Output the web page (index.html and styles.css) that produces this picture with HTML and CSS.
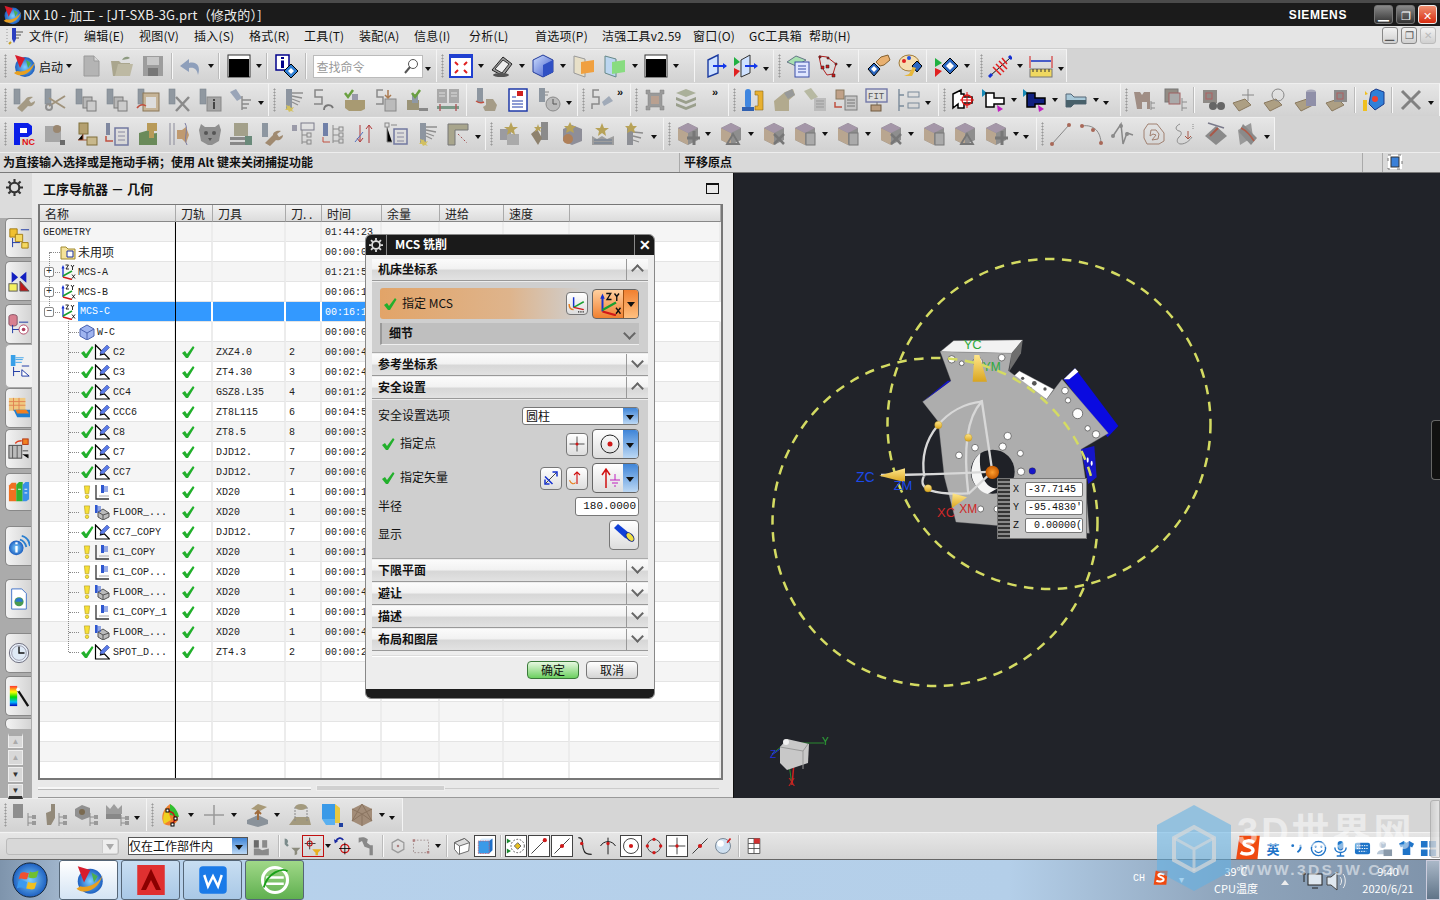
FILE: index.html
```html
<!DOCTYPE html>
<html lang="zh">
<head>
<meta charset="utf-8">
<title>NX 10 - 加工</title>
<link rel="stylesheet" href="styles.css">
</head>
<body>
<svg class="defs" xmlns="http://www.w3.org/2000/svg">
<defs>
<linearGradient id="gy" x1="0" y1="0" x2="0" y2="1"><stop offset="0" stop-color="#ffe68a"/><stop offset="1" stop-color="#d9a520"/></linearGradient>
<radialGradient id="gb"><stop offset="0" stop-color="#7fd0ff"/><stop offset="1" stop-color="#1d5fc0"/></radialGradient>
<radialGradient id="go"><stop offset="0" stop-color="#ffa030"/><stop offset="1" stop-color="#c85a00"/></radialGradient>
<linearGradient id="gc" x1="0" y1="0" x2="1" y2="1"><stop offset="0" stop-color="#cfe0ff"/><stop offset="1" stop-color="#3a54c8"/></linearGradient>
<linearGradient id="gr" x1="0" y1="0" x2="0" y2="1"><stop offset="0" stop-color="#f33"/><stop offset=".3" stop-color="#ff0"/><stop offset=".55" stop-color="#0d0"/><stop offset=".8" stop-color="#0bf"/><stop offset="1" stop-color="#00b"/></linearGradient>
<symbol id="nx" viewBox="0 0 24 24"><circle cx="13" cy="13" r="10" fill="url(#gb)"/><path d="M2 19c6 5 17 2 21-11-3 6-11 11-18 9z" fill="#e8a020"/><path d="M3 1l10 3-5 10z" fill="#d81c2c"/><path d="M14 6l5 3-3 5z" fill="#4caf50"/></symbol>
<symbol id="mnu" viewBox="0 0 18 18"><path d="M1 2v14" stroke="#999" stroke-dasharray="1 2"/><path d="M6 1h4v11l-2 4-2-4z" fill="#2a3fc0"/><path d="M10 5h7M10 8h5M10 11h3" stroke="#555"/><path d="M5 15l-2 2" stroke="#c8a020" stroke-width="2"/></symbol>
<symbol id="doc" viewBox="0 0 24 24"><path d="M5 2h10l5 5v15H5z" fill="#b4b4b4" stroke="#9a9a9a"/><path d="M15 2v5h5" fill="#d8d8d8" stroke="#999"/></symbol>
<symbol id="fold" viewBox="0 0 24 24"><path d="M1 7h8l2 2h9v13H3z" fill="#aaa68e"/><path d="M5 22l3-12h15l-3 12z" fill="#bdb9a3"/><path d="M12 6c2-4 6-4 8-2l-2 1z" fill="#8d9a80"/></symbol>
<symbol id="save" viewBox="0 0 24 24"><rect x="2" y="2" width="20" height="20" fill="#9d9d9d"/><rect x="6" y="3" width="12" height="8" fill="#c8c8c8"/><rect x="7" y="14" width="10" height="8" fill="#777"/></symbol>
<symbol id="undo" viewBox="0 0 24 24"><path d="M20 21c3-8-1-14-9-12V5L2 12l9 6v-4c5-1 8 1 9 7z" fill="#8e9fbb"/></symbol>
<symbol id="blk" viewBox="0 0 24 24"><rect x="1" y="1" width="22" height="22" fill="#fff" stroke="#333"/><rect x="2" y="5" width="20" height="18" fill="#000"/></symbol>
<symbol id="info" viewBox="0 0 24 24"><rect x="1" y="1" width="13" height="15" fill="#fff" stroke="#00008b" stroke-width="1.5"/><path d="M6 3h3v2H6zM6 6.500h3V14H6z" fill="#00008b"/><path d="M16 10l7 7-7 7-7-7z" fill="#2d7dd2" stroke="#000"/><path d="M16 14l3 3-3 3-3-3z" fill="#fff"/></symbol>
<symbol id="fit" viewBox="0 0 24 24"><rect x="1" y="1" width="22" height="22" fill="#fff" stroke="#1f3fd0" stroke-width="2"/><rect x="1" y="1" width="22" height="3" fill="#1f3fd0"/><path d="M6 8l3 3M18 8l-3 3M6 19l3-3M18 19l-3-3" stroke="#e02020" stroke-width="2"/></symbol>
<symbol id="shade" viewBox="0 0 24 24"><path d="M2 16L13 3l9 7-9 12z" fill="#999" stroke="#222"/><path d="M5 15l8-9 6 4-7 9z" fill="#eee" stroke="#333"/><ellipse cx="11" cy="21" rx="8" ry="2" fill="#555"/></symbol>
<symbol id="cube" viewBox="0 0 24 24"><path d="M12 1l10 5v12l-10 5-10-5V6z" fill="url(#gc)" stroke="#223a9a"/><path d="M12 11l10-5v12l-10 5z" fill="#3050c4"/></symbol>
<symbol id="secO" viewBox="0 0 24 24"><path d="M2 2l11 3v18L2 19z" fill="#e8e0c8" stroke="#999"/><path d="M9 8l13-2v12l-13 2z" fill="#f0a040"/></symbol>
<symbol id="secG" viewBox="0 0 24 24"><path d="M2 2l11 3v18L2 19z" fill="#bcd6f0" stroke="#688"/><path d="M9 8l13-2v12l-13 2z" fill="#88dc80"/></symbol>
<symbol id="plane" viewBox="0 0 24 24"><path d="M5 6l10-5v18L5 23z" fill="#cfe2ff" stroke="#1a3aa0" stroke-width="1.400"/><path d="M10 12h13" stroke="#1438e8" stroke-width="2"/><path d="M20 9l4 3-4 3z" fill="#1438e8"/></symbol>
<symbol id="plane2" viewBox="0 0 24 24"><path d="M0 3l6 5-6 4z" fill="#20b040"/><path d="M0 14l6 3-6 6z" fill="#e02020"/><path d="M7 6l9-5v18l-9 4z" fill="#cfe2ff" stroke="#333"/><path d="M11 12h11" stroke="#1438e8" stroke-width="2"/><path d="M20 9l4 3-4 3z" fill="#1438e8"/></symbol>
<symbol id="lay" viewBox="0 0 24 24"><path d="M1 8l9-6 10 4-10 6z" fill="#a8e0b0" stroke="#678"/><rect x="9" y="8" width="14" height="15" fill="#dfe6ff" stroke="#3a4ea8"/><path d="M12 12h8M12 15h8M12 18h8" stroke="#3a4ea8"/></symbol>
<symbol id="ptree" viewBox="0 0 24 24"><path d="M2 2l8 1 9 7-3 10-6 1-6-9z" fill="none" stroke="#b02020"/><path d="M2 2h2v2H2zM10 3h2v2h-2zM18 9h2v2h-2zM15 20h3v3h-3zM9 11h3v3H9zM4 12h3v3H4z" fill="#d01818" stroke="#222" stroke-width=".5"/></symbol>
<symbol id="hand" viewBox="0 0 24 24"><path d="M1 15l6-6 6 6-6 7z" fill="#2a66c0" stroke="#000"/><path d="M4 15l3-3 3 3-3 3z" fill="#fff"/><path d="M9 8l5-5 7-2 2 5-6 5-4 1z" fill="#e8b070" stroke="#85602f"/></symbol>
<symbol id="pal" viewBox="0 0 24 24"><ellipse cx="11" cy="9" rx="10" ry="8" fill="#f5deb0" stroke="#a07a38"/><circle cx="6" cy="7" r="2" fill="#e02020"/><circle cx="11" cy="4" r="2" fill="#2050e0"/><path d="M14 12l5-5 5 5-5 6z" fill="#2a66c0" stroke="#000"/><path d="M6 22l5-2 4-7 3 1-4 8z" fill="#e8b83a"/></symbol>
<symbol id="dia" viewBox="0 0 24 24"><path d="M0 4l7 5-7 4z" fill="#20b040"/><path d="M0 14l7 3-7 6z" fill="#e02020"/><path d="M15 4l8 8-8 8-8-8z" fill="#2a66c0" stroke="#000"/><path d="M15 8l4 4-4 4-4-4z" fill="#fff"/></symbol>
<symbol id="wcs" viewBox="0 0 24 24"><path d="M2 22L22 4" stroke="#111"/><path d="M1 23l3-3M21 2l3 3" stroke="#1430d0" stroke-width="3"/><path d="M5 13l8 8M8 10l8 8M11 7l8 8M14 4l5 6" stroke="#e01c1c" stroke-width="1.500"/></symbol>
<symbol id="rul" viewBox="0 0 24 24"><path d="M1 2v12M23 2v12" stroke="#d01818"/><path d="M2 7h20" stroke="#1430c0" stroke-width="1.500"/><rect x="1" y="15" width="22" height="8" fill="#f0d860" stroke="#777"/><path d="M4 15v3M8 15v3M12 15v3M16 15v3M20 15v3" stroke="#333"/></symbol>
<symbol id="stem" viewBox="0 0 24 24"><rect x="2" y="1" width="6" height="15" fill="#9098a0" stroke="#7e8890" stroke-width=".6"/></symbol>
<symbol id="wr" viewBox="0 0 24 24"><use href="#stem"/><path d="M5 20l8-8c1-3 5-4 8-3l-4 3 2 3 4-2c0 4-4 6-7 5l-6 6z" fill="#a49a84"/></symbol>
<symbol id="sc" viewBox="0 0 24 24"><use href="#stem"/><path d="M6 18L22 8M6 10l16 10" stroke="#a0937c" stroke-width="2"/><circle cx="6" cy="19" r="3" fill="none" stroke="#8f8f8f" stroke-width="2"/></symbol>
<symbol id="cp" viewBox="0 0 24 24"><use href="#stem"/><rect x="9" y="9" width="9" height="11" fill="#b8b8b8" stroke="#7b7b7b"/><rect x="13" y="13" width="9" height="10" fill="#ccc" stroke="#7b7b7b"/></symbol>
<symbol id="cl" viewBox="0 0 24 24"><use href="#stem"/><rect x="7" y="5" width="16" height="18" fill="#c6b497" stroke="#8a7757"/><rect x="10" y="9" width="10" height="11" fill="#ddd"/><path d="M1 20c3-4 6-4 9-2" stroke="#c05040" stroke-width="1.500" fill="none"/></symbol>
<symbol id="xx" viewBox="0 0 24 24"><use href="#stem"/><path d="M9 9l13 14M22 9L9 23" stroke="#8a8a8a" stroke-width="2.500"/></symbol>
<symbol id="ii" viewBox="0 0 24 24"><use href="#stem"/><rect x="9" y="9" width="14" height="14" fill="#a5a5a5" stroke="#888"/><path d="M15 11h2v2h-2zM15 14h2v7h-2z" fill="#444"/></symbol>
<symbol id="fl" viewBox="0 0 24 24"><path d="M1 4l6-3 6 9-5 3z" fill="#9aa5b8"/><path d="M13 8v14M13 12h9M13 16h7M13 20h5" stroke="#8a8a8a" stroke-width="1.400"/></symbol>
<symbol id="ln" viewBox="0 0 24 24"><rect x="5" y="1" width="6" height="20" fill="#8d95a0"/><path d="M11 5h11M11 8l10 2M11 11l8 3M11 14l6 3" stroke="#8e8e8e" stroke-width="1.300"/><path d="M8 17l2 3 3-1-2 3 2 2-3-1-2 1-1-2-3 0 2-2-1-3 3 1z" fill="#d2c060"/></symbol>
<symbol id="sp" viewBox="0 0 24 24"><path d="M11 2H3v7h7v7H2" fill="none" stroke="#878787" stroke-width="1.500"/><path d="M12 22c0-6 7-6 9-2" fill="none" stroke="#777" stroke-width="1.800"/></symbol>
<symbol id="ck" viewBox="0 0 24 24"><rect x="9" y="6" width="6" height="12" fill="#99a"/><path d="M2 12h20v9l-4 2H6l-4-3z" fill="#a89a72"/><path d="M2 5l3 4 5-7" fill="none" stroke="#6aa040" stroke-width="2.500"/></symbol>
<symbol id="sd" viewBox="0 0 24 24"><path d="M9 2H3v7h6v7H2" fill="none" stroke="#8a8a8a" stroke-width="1.500"/><rect x="11" y="11" width="11" height="12" fill="#bbb" stroke="#888"/><path d="M14 2v8M11 7l3 3 3-3" stroke="#aa7a50" stroke-width="1.500" fill="none"/></symbol>
<symbol id="ck2" viewBox="0 0 24 24"><path d="M2 12h12v10H2z" fill="#9b9478"/><path d="M14 20h9v3h-9z" fill="#888"/><rect x="7" y="6" width="6" height="9" fill="#8e98a5"/><path d="M7 5l3 4 5-7" fill="none" stroke="#6aa040" stroke-width="2.500"/></symbol>
<symbol id="bk" viewBox="0 0 24 24"><rect x="1" y="1" width="10" height="14" fill="#a9a9a9"/><rect x="13" y="1" width="10" height="14" fill="#a9a9a9"/><path d="M3 5h6M3 8h6M15 5h6M15 8h6" stroke="#ddd"/><rect x="1" y="18" width="22" height="3" fill="#7b9a88"/><path d="M4 16v7M20 16v7" stroke="#b06060" stroke-width="1.500"/></symbol>
<symbol id="rob" viewBox="0 0 24 24"><rect x="2" y="0" width="6" height="14" fill="#8d96a0"/><path d="M1 13c3 2 6 2 8 1" stroke="#c05040" stroke-width="1.500" fill="none"/><path d="M11 11h7l4 6-2 6H10l-2-4 3-2z" fill="#a59c88"/></symbol>
<symbol id="pgb" viewBox="0 0 24 24"><rect x="3" y="1" width="18" height="22" fill="#fff" stroke="#1f3aa8" stroke-width="1.500"/><path d="M6 9h4M6 13h11M6 16h11M6 19h11" stroke="#1f3aa8"/><path d="M11 3h6v5h-6z" fill="#d02020"/></symbol>
<symbol id="clk" viewBox="0 0 24 24"><rect x="2" y="0" width="6" height="14" fill="#8d96a0"/><path d="M8 4h4M8 7h3" stroke="#888"/><circle cx="16" cy="16" r="7" fill="#bbb" stroke="#8a8a8a"/><path d="M16 11v5h4" stroke="#555" fill="none"/></symbol>
<symbol id="sfl" viewBox="0 0 24 24"><path d="M9 2H3v7h6v7H2v5" fill="none" stroke="#8a8a8a" stroke-width="1.500"/><path d="M12 14l7-6 4 5-9 5z" fill="#a0aab8"/></symbol>
<symbol id="mch" viewBox="0 0 24 24"><path d="M3 2h4v3h10V2h4v4h-2v12h2v4h-4v-3H7v3H3v-4h2V6H3z" fill="#9a9a9a" stroke="#808080" stroke-width=".5"/><rect x="8" y="8" width="8" height="8" fill="#b9a090"/></symbol>
<symbol id="stk" viewBox="0 0 24 24"><path d="M12 1l10 4-10 4-10-4z" fill="#aab09a"/><path d="M2 9l10 4 10-4v3l-10 4-10-4zM2 15l10 4 10-4v3l-10 4-10-4z" fill="#9a9f8c"/></symbol>
<symbol id="bot" viewBox="0 0 24 24"><rect x="4" y="1" width="6" height="19" rx="3" fill="#3f86e0"/><rect x="1" y="19" width="12" height="4" fill="#3060b0"/><path d="M14 3h8v19h-8v-4h3V7h-3z" fill="#e8b030" stroke="#8a6a18" stroke-width=".6"/></symbol>
<symbol id="elb" viewBox="0 0 24 24"><path d="M2 13l11-9 8-3 2 6-6 5v11H3z" fill="#b2aa8e"/><path d="M12 5l8-4 3 6-7 4z" fill="#979999"/></symbol>
<symbol id="lmp" viewBox="0 0 24 24"><path d="M1 3l7-3 7 9-7 3z" fill="#b7b9a2"/><rect x="11" y="10" width="12" height="13" fill="#bcbcbc"/><path d="M13 13h8M13 16h8M13 19h8" stroke="#999"/></symbol>
<symbol id="arrp" viewBox="0 0 24 24"><rect x="2" y="2" width="8" height="9" fill="#c0a188" stroke="#8a7a60"/><rect x="11" y="8" width="12" height="14" fill="#c5c5c5" stroke="#7c7c7c"/><path d="M1 14v5h7" stroke="#c05040" fill="none" stroke-width="1.500"/><path d="M13 12h8M13 15h8M13 18h8" stroke="#777"/></symbol>
<symbol id="fit2" viewBox="0 0 24 24"><rect x="1" y="1" width="21" height="13" fill="none" stroke="#7278a8" stroke-width="1.400"/><text x="3" y="11" font-size="9" font-family="Liberation Mono" fill="#555">FIT</text><path d="M12 14v3" stroke="#777"/><rect x="6" y="17" width="10" height="6" fill="#b89c80" stroke="#705a40"/></symbol>
<symbol id="lst" viewBox="0 0 24 24"><path d="M3 1v22M3 7h5M3 18h5" stroke="#7a8a9a" stroke-width="1.400"/><rect x="12" y="4" width="11" height="5" fill="none" stroke="#7a8a9a"/><rect x="12" y="15" width="11" height="5" fill="none" stroke="#7a8a9a"/></symbol>
<symbol id="ct1" viewBox="0 0 24 24"><path d="M2 6l8-4v4h3v3h8v6H13v5H7v-4L2 20z" fill="#fff" stroke="#000" stroke-width="1.500"/><circle cx="16" cy="12" r="5" fill="none" stroke="#e01010" stroke-width="1.300"/><path d="M16 4v16M9 12h14" stroke="#e01010"/></symbol>
<symbol id="ct2" viewBox="0 0 24 24"><path d="M0 1l5 4-5 4z" fill="#168ab8"/><path d="M4 5l8 0v5h10v6H12v3H4z" fill="#fff" stroke="#000" stroke-width="1.500"/><path d="M15 17l6 4-5 3z" fill="#c020c0"/></symbol>
<symbol id="ct3" viewBox="0 0 24 24"><path d="M0 1l5 4-5 4z" fill="#168ab8"/><path d="M4 5l8 0v5h10v6H12v3H4z" fill="#102080" stroke="#000" stroke-width="1.500"/><path d="M15 17l6 4-5 3z" fill="#c020c0"/></symbol>
<symbol id="nz" viewBox="0 0 24 24"><path d="M2 6h5l3 3h12v7H10l-3 3H2z" fill="#a8c8d8" stroke="#567"/><path d="M2 12h20v4H10l-3 3H2z" fill="#48606a"/></symbol>
<symbol id="grp1" viewBox="0 0 24 24"><path d="M1 4h6l2 3 2-3h6v17h-3v-7H9v7H4z" fill="#a08e85"/><path d="M18 13v9M18 15h4M18 20h4" stroke="#8c8c8c"/></symbol>
<symbol id="grp2" viewBox="0 0 24 24"><rect x="1" y="1" width="13" height="13" fill="#928c84" stroke="#777"/><rect x="5" y="5" width="11" height="11" fill="#aaa" stroke="#a06060"/><path d="M18 10v13M18 14h5M18 20h5" stroke="#8c8c8c"/></symbol>
<symbol id="bino" viewBox="0 0 24 24"><rect x="2" y="2" width="14" height="13" fill="#8e8a86"/><rect x="5" y="5" width="6" height="6" fill="none" stroke="#b06060"/><circle cx="12" cy="18" r="4" fill="#666"/><circle cx="20" cy="18" r="4" fill="#666"/></symbol>
<symbol id="tag1" viewBox="0 0 24 24"><path d="M1 15l12-4 6 6-12 6z" fill="#ad9f83" stroke="#8a7a60"/><path d="M16 1v12M10 7h12" stroke="#888"/></symbol>
<symbol id="tag2" viewBox="0 0 24 24"><path d="M1 15l12-4 6 6-12 6z" fill="#ad9f83" stroke="#8a7a60"/><circle cx="15" cy="7" r="6" fill="none" stroke="#888"/></symbol>
<symbol id="tag3" viewBox="0 0 24 24"><path d="M1 15l12-4 6 6-12 6z" fill="#ad9f83" stroke="#8a7a60"/><ellipse cx="17" cy="4" rx="5" ry="2.500" fill="#aab"/><path d="M12 4v14h10V4z" fill="#8f8fa8"/></symbol>
<symbol id="tag4" viewBox="0 0 24 24"><path d="M1 15l12-4 6 6-12 6z" fill="#ad9f83" stroke="#8a7a60"/><rect x="9" y="2" width="13" height="12" fill="#8b8b8b"/><rect x="12" y="5" width="6" height="6" fill="none" stroke="#b06060"/></symbol>
<symbol id="mag" viewBox="0 0 24 24"><path d="M14 1l8 3v12l-9 6-6-6 2-12z" fill="#3080d8" stroke="#1a3a8a"/><circle cx="13" cy="11" r="3" fill="#f04030"/><path d="M3 3l3 3-3 1zM1 12h4v11H1z" fill="#f0c020"/></symbol>
<symbol id="bigx" viewBox="0 0 24 24"><path d="M3 3l18 18M21 3L3 21" stroke="#818181" stroke-width="3"/></symbol>
<symbol id="pnc" viewBox="0 0 24 24"><path d="M2 1h14l4 3v8l-4 3H8v8H2z" fill="#0a1ee8"/><path d="M8 6h7v5H8z" fill="#fff"/><text x="10" y="23" font-size="9" font-family="Liberation Sans" font-weight="bold" fill="#e01010">NC</text></symbol>
<symbol id="bxs" viewBox="0 0 24 24"><path d="M12 1l10 5v12l-10 5-10-5V6z" fill="#8e8e8e"/><path d="M2 6l10 5v12L2 18z" fill="#b9a690"/><path d="M12 1l10 5-10 5L2 6z" fill="#a496a8"/></symbol>
<symbol id="bx2" viewBox="0 0 24 24"><use href="#bxs"/><path d="M12 12l10 10M22 12L12 22" stroke="#777" stroke-width="2.500"/></symbol>
<symbol id="bx3" viewBox="0 0 24 24"><use href="#bxs"/><rect x="13" y="11" width="9" height="12" fill="#aaa" stroke="#777"/></symbol>
<symbol id="bx4" viewBox="0 0 24 24"><use href="#bxs"/><path d="M8 22l6-10 6 10z" fill="none" stroke="#777" stroke-width="1.800"/></symbol>
<symbol id="bx5" viewBox="0 0 24 24"><use href="#bxs"/><path d="M18 9v14M11 16h13" stroke="#777" stroke-width="3"/></symbol>
<symbol id="crv1" viewBox="0 0 24 24"><path d="M3 22L20 3" stroke="#888"/><circle cx="3" cy="22" r="2" fill="#a86858"/><circle cx="20" cy="3" r="2" fill="#a86858"/></symbol>
<symbol id="crv2" viewBox="0 0 24 24"><path d="M2 4c12-2 19 6 19 18" stroke="#888" fill="none"/><circle cx="2" cy="4" r="2" fill="#a86858"/><circle cx="13" cy="8" r="2" fill="#a86858"/><circle cx="21" cy="21" r="2" fill="#a86858"/></symbol>
<symbol id="crv3" viewBox="0 0 24 24"><path d="M2 14L10 2l2 20 4-11 6 2" stroke="#888" fill="none" stroke-width="1.500"/><circle cx="2" cy="14" r="2" fill="#8a8a8a"/><circle cx="10" cy="4" r="2" fill="#8a8a8a"/><circle cx="16" cy="12" r="2" fill="#8a8a8a"/></symbol>
<symbol id="crv4" viewBox="0 0 24 24"><path d="M6 2h9l7 9v8l-5 3H5l-3-6V8zM9 8h5l3 4-1 5-6 1 4-5-3-1-3 2z" fill="none" stroke="#a08070"/></symbol>
<symbol id="crv5" viewBox="0 0 24 24"><path d="M7 2C2 4 2 8 6 9c3 0 3 4 0 6-3 3-2 7 2 7 5 0 9-4 11-7" fill="none" stroke="#8a8a8a"/><path d="M15 9v8M12 14l3 3 3-3" stroke="#a85848" fill="none"/><path d="M20 2v6" stroke="#888" stroke-dasharray="1 1"/></symbol>
<symbol id="crv6" viewBox="0 0 24 24"><path d="M1 14L12 4l11 10-11 9z" fill="#8a8a8a"/><path d="M6 14l8-8" stroke="#a85848" stroke-width="2"/><path d="M4 1l16 5" stroke="#7a7a8a" stroke-width="1.500"/></symbol>
<symbol id="crv7" viewBox="0 0 24 24"><path d="M3 8l13-7 2 14-13 8z" fill="#999"/><path d="M8 2l14 14-6 7L4 10z" fill="#8a8a8a"/><path d="M6 6c6 3 10 8 13 13" stroke="#b05c48" stroke-width="1.500" fill="none"/></symbol>
<symbol id="tr1" viewBox="0 0 24 24"><rect x="1" y="1" width="10" height="14" fill="#8e8e8e"/><path d="M16 10v13M16 14h5M16 20h5" stroke="#8c8c8c"/><rect x="20" y="12" width="4" height="4" fill="#999"/><rect x="20" y="18" width="4" height="4" fill="#999"/></symbol>
<symbol id="tr2" viewBox="0 0 24 24"><path d="M3 10l5-2V1h4v14l-4 7H4z" fill="#938a7a"/><path d="M16 10v13M16 14h5M16 20h5" stroke="#8c8c8c"/><rect x="20" y="12" width="4" height="4" fill="#999"/><rect x="20" y="18" width="4" height="4" fill="#999"/></symbol>
<symbol id="tr3" viewBox="0 0 24 24"><path d="M8 2l8 3v9l-8 3-7-4V6z" fill="#909090"/><circle cx="8" cy="9" r="3" fill="#7a6a50"/><path d="M16 10v13M16 14h5M16 20h5" stroke="#8c8c8c"/><rect x="20" y="12" width="4" height="4" fill="#999"/><rect x="20" y="18" width="4" height="4" fill="#999"/></symbol>
<symbol id="tr4" viewBox="0 0 24 24"><path d="M1 2l4 4 4-5 4 5 4-4v9H1z" fill="#9d9d9d"/><path d="M1 11h15v5H1z" fill="#888"/><path d="M16 12v11M16 15h5M16 20h5" stroke="#8c8c8c"/><rect x="20" y="13" width="4" height="4" fill="#999"/><rect x="20" y="18" width="4" height="4" fill="#999"/></symbol>
<symbol id="star1" viewBox="0 0 24 24"><rect x="2" y="7" width="11" height="11" fill="#9b9ba0"/><rect x="9" y="12" width="12" height="11" fill="#aaa"/><path d="M13 0l2 5 5 0-4 3 1 5-4-3-4 3 1-5-4-3 5 0z" fill="#b7a258"/></symbol>
<symbol id="star2" viewBox="0 0 24 24"><rect x="12" y="0" width="7" height="18" fill="#8b8b8b"/><path d="M2 12l6-5 5 9-4 7z" fill="#8e826e"/><path d="M9 2l1 3 3 0-2 2 1 3-3-2-3 2 1-3-2-2 3 0z" fill="#b7a258"/></symbol>
<symbol id="star3" viewBox="0 0 24 24"><path d="M12 3l10 4v12l-10 4-9-4V7z" fill="#8e8e98"/><circle cx="8" cy="17" r="5" fill="#b08058"/><path d="M10 0l2 4 4 0-3 3 1 4-4-2-4 2 1-4-3-3 4 0z" fill="#b7a258"/></symbol>
<symbol id="star4" viewBox="0 0 24 24"><path d="M1 14l5 3 5-3 5 3 7-3v9H1z" fill="#9e9e9e"/><path d="M3 18h18M3 21h18" stroke="#6a7a90"/><path d="M11 1l2 5 5 0-4 3 1 5-4-3-4 3 1-5-4-3 5 0z" fill="#b7a258"/></symbol>
<symbol id="star5" viewBox="0 0 24 24"><rect x="5" y="6" width="6" height="17" fill="#8d8f95"/><path d="M11 10l10 1M11 14l8 2M11 18l6 2" stroke="#8c8c8c" stroke-width="1.300"/><path d="M9 0l2 4 4 0-3 3 1 4-4-2-4 2 1-4-3-3 4 0z" fill="#b7a258"/></symbol>
<symbol id="ptab" viewBox="0 0 24 24"><rect x="2" y="4" width="16" height="16" fill="#a6a6a6"/><circle cx="14" cy="7" r="4" fill="#9a8770"/><rect x="17" y="18" width="5" height="5" fill="#6a6a6a"/></symbol>
<symbol id="to" viewBox="0 0 24 24"><rect x="5" y="1" width="9" height="11" fill="#b4a070" stroke="#80703a"/><path d="M9 12v6H4M9 18h4" stroke="#a05030"/><rect x="13" y="15" width="10" height="8" fill="#c8b88c" stroke="#806e3a"/></symbol>
<symbol id="lse" viewBox="0 0 24 24"><rect x="1" y="1" width="4" height="12" fill="#8088a0"/><path d="M1 14v5h7" stroke="#c05040" fill="none" stroke-width="1.500"/><rect x="10" y="6" width="13" height="17" fill="none" stroke="#7278a0" stroke-width="1.500"/><path d="M13 10h7M13 14h7M13 18h7" stroke="#8888a0"/></symbol>
<symbol id="wdg" viewBox="0 0 24 24"><path d="M3 11l10-3v4l8-1v12H3z" fill="#6a8a5a"/><rect x="11" y="1" width="10" height="8" fill="#b89a58"/><rect x="13" y="8" width="5" height="8" fill="#b89a58"/></symbol>
<symbol id="par" viewBox="0 0 24 24"><path d="M3 1v22M7 1v22" stroke="#8a8a9a"/><path d="M10 8h5l4-3 3 8-3 8-4-4h-5z" fill="#c09a70"/><path d="M18 1c4 7-2 15 2 22" stroke="#7a7aa0" fill="none"/></symbol>
<symbol id="tiger" viewBox="0 0 24 24"><path d="M3 2l4 3h10l4-3 2 6-2 11-7 4h-4l-7-4L1 8z" fill="#8f8f8f"/><circle cx="8" cy="11" r="2" fill="#555"/><circle cx="16" cy="11" r="2" fill="#555"/><path d="M10 16h4l-2 3z" fill="#555"/></symbol>
<symbol id="shl" viewBox="0 0 24 24"><rect x="5" y="1" width="14" height="13" fill="#a3a08a"/><path d="M1 15h15v3H1zM1 20h15v3H1z" fill="#888"/><rect x="16" y="14" width="7" height="9" fill="#6a8a7a"/></symbol>
<symbol id="wrb" viewBox="0 0 24 24"><rect x="2" y="1" width="6" height="14" fill="#8d96a0"/><path d="M5 21l8-8c0-3 4-5 8-4l-4 3 2 3 4-2c0 4-4 6-7 5l-6 6z" fill="#a08a70"/></symbol>
<symbol id="numtr" viewBox="0 0 24 24"><rect x="1" y="3" width="5" height="6" fill="#9a9aa8"/><rect x="10" y="1" width="13" height="7" fill="none" stroke="#7a7a8a"/><path d="M11 8v14M11 13h5M11 20h5" stroke="#8a8a8a"/><rect x="16" y="11" width="4" height="4" fill="none" stroke="#888"/><rect x="16" y="18" width="4" height="4" fill="none" stroke="#888"/></symbol>
<symbol id="mtr" viewBox="0 0 24 24"><rect x="1" y="1" width="5" height="13" fill="#7080a8"/><path d="M1 15v5h7" stroke="#c05040" fill="none"/><path d="M11 3v18M11 7h6M11 13h6M11 19h6" stroke="#8a8a8a"/><rect x="17" y="5" width="4" height="4" fill="none" stroke="#888"/><rect x="17" y="11" width="4" height="4" fill="none" stroke="#888"/><rect x="17" y="17" width="4" height="4" fill="none" stroke="#888"/></symbol>
<symbol id="ud" viewBox="0 0 24 24"><path d="M7 3v16M4 16l3 4 3-4" stroke="#b03838" fill="none"/><path d="M16 21V4M13 7l3-4 3 4" stroke="#b03838" fill="none"/><path d="M2 20l8-10" stroke="#5070c0"/></symbol>
<symbol id="lsb" viewBox="0 0 24 24"><rect x="1" y="1" width="4" height="4" fill="none" stroke="#888"/><path d="M7 3h6M3 5v15h5" stroke="#888"/><rect x="10" y="7" width="13" height="15" fill="none" stroke="#7278a0" stroke-width="1.500"/><path d="M13 11h7M13 15h7M13 19h7" stroke="#8888a0"/></symbol>
<symbol id="corner" viewBox="0 0 24 24"><path d="M2 23V2h20v6H9v15z" fill="#a8a58c" stroke="#777"/><path d="M12 12l3 3 3 3 3 3" stroke="#a05050" stroke-dasharray="2 2"/></symbol>
<symbol id="rain" viewBox="0 0 24 24"><path d="M11 1C4 6 1 14 5 21c5 3 11 1 14-4-1-8-4-13-8-16z" fill="#f08030"/><path d="M11 1c5 3 8 8 9 13l-9-2z" fill="#30c030"/><path d="M5 21c-2-6 0-12 3-16l4 12z" fill="#f0d020"/><path d="M8 7l6 3 3 6-4 5" fill="none" stroke="#c01818" stroke-width="1.500"/><rect x="15" y="14" width="3" height="3" fill="#fff" stroke="#000"/><rect x="7" y="6" width="3" height="3" fill="#fff" stroke="#000"/><rect x="12" y="20" width="3" height="3" fill="#fff" stroke="#000"/></symbol>
<symbol id="cross" viewBox="0 0 24 24"><path d="M12 2v20M2 12h20" stroke="#999" stroke-width="1.500"/></symbol>
<symbol id="blkup" viewBox="0 0 24 24"><path d="M2 17l11-5 10 5v4l-10 3-11-3z" fill="#8a929a"/><path d="M6 6l7-5 9 3-7 4z" fill="#a89a78"/><path d="M13 17V8M10 11l3-3 3 3" stroke="#a06c3c" stroke-width="2" fill="none"/></symbol>
<symbol id="cyl" viewBox="0 0 24 24"><path d="M1 22l6-8h14l2 8z" fill="#a39a7e"/><ellipse cx="13" cy="4" rx="6" ry="3" fill="#a39a7e"/><path d="M7 4v14M19 4v14" stroke="#888" stroke-dasharray="2 1"/></symbol>
<symbol id="bcube" viewBox="0 0 24 24"><rect x="3" y="1" width="13" height="15" fill="#3a9ae8"/><path d="M16 1l5 4v15h-5z" fill="#e8c840"/><path d="M3 16h13v6H7z" fill="#5ab0f0"/><rect x="20" y="20" width="4" height="4" fill="#2040a0"/></symbol>
<symbol id="mesh" viewBox="0 0 24 24"><path d="M12 1l10 5v12l-10 5-10-5V6z" fill="#a28c78"/><path d="M2 6l10 5 10-5M12 11v12M2 18l10-7 10 7M12 1L2 18M12 1l10 17" stroke="#8a7460" fill="none"/></symbol>
<symbol id="s-wr" viewBox="0 0 24 24"><rect x="1" y="5" width="6" height="9" fill="#6a6a6a"/><rect x="11" y="5" width="6" height="9" fill="#8a8a8a"/><path d="M1 15l6 0 4 2 8-2v8H1z" fill="#8a8a8a"/></symbol>
<symbol id="fun" viewBox="0 0 24 24"><path d="M2 3c4 0 5 4 3 6l2 2-2 2-3-3c0-2 0-4 0-7z" fill="#7a8a8a"/><path d="M10 14h11l-4 4v4l-3 1v-5z" fill="#8a8a7c"/></symbol>
<symbol id="fun2" viewBox="0 0 24 24"><path d="M8 2v14M2 9h13" stroke="#222"/><circle cx="8" cy="9" r="3" fill="none" stroke="#c01010" stroke-width="1.300"/><path d="M11 16h11l-4 4v3h-3v-3z" fill="#e8b020"/></symbol>
<symbol id="rot" viewBox="0 0 24 24"><circle cx="13" cy="15" r="5" fill="none" stroke="#d01010" stroke-width="1.500"/><path d="M13 8v14M6 15h14" stroke="#000"/><path d="M2 7c2-5 7-6 9-2" stroke="#1a2aa0" fill="none" stroke-width="2"/><path d="M0 4l5 2-4 3z" fill="#1a2aa0"/></symbol>
<symbol id="cur2" viewBox="0 0 24 24"><path d="M2 2c4-1 8-1 11 2l-1 4 4 3 3 0v12h-4v-8l-6-2-3-7-4 2z" fill="#888"/></symbol>
<symbol id="hex" viewBox="0 0 24 24"><path d="M12 4l7 4v8l-7 4-7-4V8z" fill="none" stroke="#9a9a9a" stroke-width="1.500"/><circle cx="12" cy="12" r="1.500" fill="#b08080"/></symbol>
<symbol id="sqd" viewBox="0 0 24 24"><rect x="3" y="5" width="18" height="15" fill="none" stroke="#9a8888" stroke-dasharray="2 2"/><path d="M2 4h3v3H2zM19 18h3v3h-3z" fill="#b08080"/></symbol>
<symbol id="pcb" viewBox="0 0 24 24"><path d="M3 8l12-5 6 5-1 10-12 4-5-6z" fill="#fff" stroke="#555"/><path d="M3 8l12-5 6 5-12 4zM9 12v10" fill="#ddd" stroke="#555"/></symbol>
<symbol id="blu" viewBox="0 0 24 24"><rect x="4" y="6" width="13" height="15" fill="#3a9ae8"/><path d="M4 6l4-3h13l-4 3z" fill="#d7ecff"/><path d="M17 6l4-3v14l-4 4z" fill="#1f6fc8"/><path d="M4 6h13v15H4z" fill="none" stroke="#d05060" stroke-dasharray="1 1"/></symbol>
<symbol id="mid" viewBox="0 0 24 24"><path d="M1 3l5 3-5 3zM1 15l5 3-5 3z" fill="#1c8a30"/><circle cx="14" cy="12" r="8" fill="none" stroke="#333" stroke-dasharray="2 2"/><path d="M10 12l4-4 4 4-4 4z" fill="#e8c020" stroke="#555"/></symbol>
<symbol id="sl" viewBox="0 0 24 24"><path d="M3 21L19 5" stroke="#222"/><circle cx="19" cy="5" r="2.500" fill="#d01818"/></symbol>
<symbol id="sl2" viewBox="0 0 24 24"><path d="M3 21L21 3" stroke="#222"/><circle cx="12" cy="12" r="2.500" fill="#d01818"/></symbol>
<symbol id="tg" viewBox="0 0 24 24"><path d="M4 2c8 0 3 10 7 16 1 3 5 4 9 4" fill="none" stroke="#222" stroke-width="1.400"/><circle cx="8" cy="9" r="2" fill="#d01818"/></symbol>
<symbol id="ft" viewBox="0 0 24 24"><path d="M3 12c4-7 14-7 18 0M12 2v20" fill="none" stroke="#222" stroke-width="1.200"/><circle cx="12" cy="9" r="2" fill="#d01818"/></symbol>
<symbol id="cc" viewBox="0 0 24 24"><circle cx="12" cy="12" r="9" fill="none" stroke="#222"/><circle cx="12" cy="12" r="2.500" fill="#d01818"/></symbol>
<symbol id="ccq" viewBox="0 0 24 24"><circle cx="12" cy="12" r="8" fill="none" stroke="#333"/><circle cx="12" cy="4" r="2" fill="#d01818"/><circle cx="12" cy="20" r="2" fill="#d01818"/><circle cx="4" cy="12" r="2" fill="#d01818"/><circle cx="20" cy="12" r="2" fill="#d01818"/></symbol>
<symbol id="plus" viewBox="0 0 24 24"><path d="M12 2v20M2 12h20" stroke="#222"/><circle cx="12" cy="12" r="2" fill="#d01818"/></symbol>
<symbol id="ball" viewBox="0 0 24 24"><circle cx="12" cy="12" r="9" fill="#cfe0f0" stroke="#678"/><circle cx="9" cy="9" r="4" fill="#fff"/><path d="M17 8l4-5" stroke="#d01818" stroke-width="2"/></symbol>
<symbol id="gridi" viewBox="0 0 24 24"><path d="M5 3h14v18H5z" fill="#fff" stroke="#444"/><path d="M5 9h14M5 15h14M12 3v18" stroke="#444"/><rect x="12" y="3" width="7" height="6" fill="#d03030"/></symbol>
<symbol id="opm" viewBox="0 0 16 16"><path d="M1.500 1v14h14l-5-5-4 1 1-4z" fill="#fff" stroke="#000" stroke-width="1.200"/><path d="M6 10l1-3 6-6 2.500 2.500-6 6z" fill="#5a7ce8" stroke="#27358a" stroke-width=".5"/></symbol>
<symbol id="opc" viewBox="0 0 16 16"><path d="M2 1v14h13" fill="none" stroke="#333" stroke-width="1.300"/><path d="M5 12h10" stroke="#aaa"/><rect x="7" y="1" width="3" height="8" fill="#3058d0"/><path d="M10 3h4M10 5h4M10 7h4" stroke="#3058d0"/></symbol>
<symbol id="opf" viewBox="0 0 16 16"><path d="M4 8l5-3 6 4v4l-6 3-5-3z" fill="#bbb" stroke="#555"/><path d="M4 8l5 3 6-2M9 11v5" stroke="#555" fill="none"/><rect x="1" y="1" width="2.500" height="8" fill="#3058d0"/><path d="M3 3h4M3 5h4M3 7h4" stroke="#3058d0"/></symbol>
<symbol id="ok" viewBox="0 0 14 14"><path d="M1 8l3-2 2 3 6-8 1.500 1.500L7 13H5z" fill="#22b02c"/></symbol>
<symbol id="bulb" viewBox="0 0 10 16"><path d="M2 1h6l-1 9H3z" fill="#f7e038" stroke="#b09a18" stroke-width=".7"/><circle cx="5" cy="13.500" r="2" fill="#f7e038" stroke="#b09a18" stroke-width=".7"/></symbol>
<symbol id="mcs" viewBox="0 0 16 16"><path d="M3 13V3" stroke="#1430d0" stroke-width="1.300"/><path d="M1.500 4.500L3 1l1.500 3.500z" fill="#1430d0"/><path d="M3 13l9 2.500" stroke="#d01818" stroke-width="1.500"/><path d="M3 12l9-5" stroke="#18a030" stroke-width="1.500"/><path d="M5.500 1h3L6 5h3M11 1l1.500 2L14 1M12.500 3v3M12 10.500l3 4M15 10.500l-3 4" stroke="#111" stroke-width=".9" fill="none"/></symbol>
<symbol id="wp" viewBox="0 0 16 16"><path d="M8 1l7 4v7l-7 4-7-4V5z" fill="#9fb4f0" stroke="#4a62b0"/><path d="M1 5l7 4 7-4M8 9v7" stroke="#4a62b0" fill="none"/></symbol>
<symbol id="fld" viewBox="0 0 16 16"><path d="M1 3h5l2 2h7v10H1z" fill="#f5e29a" stroke="#a08a30"/><path d="M7 7h6v6H7z" fill="#fff" stroke="#1a30a0"/></symbol>
<symbol id="gear" viewBox="0 0 16 16"><circle cx="8" cy="8" r="4.500" fill="none" stroke="currentColor" stroke-width="2"/><path d="M8 0v3M8 13v3M0 8h3M13 8h3M2.300 2.300l2 2M11.700 11.700l2 2M13.700 2.300l-2 2M4.300 11.700l-2 2" stroke="currentColor" stroke-width="2"/></symbol>
<symbol id="sglogo" viewBox="0 0 24 24"><path d="M4 1h18l-2 21H1z" fill="#f04a10"/><path d="M17 7c-3-2-9-2-9 1 0 3 8 2 8 6 0 4-8 4-11 2" fill="none" stroke="#fff" stroke-width="3"/></symbol>
<symbol id="triad" viewBox="0 0 16 16"><path d="M5 11V2" stroke="#1430d0" stroke-width="1.300"/><path d="M5 11l9-5" stroke="#18a030" stroke-width="1.300"/><path d="M5 11l9 2" stroke="#d01818" stroke-width="1.300"/><path d="M1 8c0 4 2 5 4 5" stroke="#e88020" fill="none" stroke-width="1.300"/><path d="M9 15h1M11 15h1M13 15h1" stroke="#111"/></symbol>
<symbol id="iface" viewBox="0 0 18 18"><circle cx="9" cy="9" r="7.500" fill="#fff" stroke="#1f74c8" stroke-width="1.500"/><circle cx="6" cy="7" r="1.200" fill="#1f74c8"/><circle cx="12" cy="7" r="1.200" fill="#1f74c8"/><path d="M5 11c2 3 6 3 8 0" stroke="#1f74c8" fill="none" stroke-width="1.300"/></symbol>
<symbol id="imic" viewBox="0 0 18 18"><rect x="6" y="1" width="6" height="10" rx="3" fill="#1f74c8"/><path d="M3 8c0 7 12 7 12 0M9 14v3M5 17h8" stroke="#1f74c8" fill="none" stroke-width="1.500"/></symbol>
<symbol id="ikey" viewBox="0 0 18 18"><rect x="1" y="3" width="16" height="12" rx="2" fill="#1f74c8"/><path d="M3 6h12M3 9h12M5 12h8" stroke="#fff" stroke-dasharray="1.500 1"/></symbol>
<symbol id="iper" viewBox="0 0 18 18"><circle cx="7" cy="5" r="3.500" fill="#b8c8d8"/><path d="M1 15c0-6 12-6 12 0z" fill="#b8c8d8"/><rect x="8" y="10" width="9" height="7" fill="#8a9aaa"/></symbol>
<symbol id="ishr" viewBox="0 0 18 18"><path d="M1 4l5-3 3 2 3-2 5 3-2 4-2-1v9H5V7L3 8z" fill="#1f74c8"/></symbol>
<symbol id="igrd" viewBox="0 0 18 18"><path d="M1 1h7v7H1zM10 1h7v7h-7zM1 10h7v7H1zM10 10h7v7h-7z" fill="#1f74c8"/></symbol>
<symbol id="icom" viewBox="0 0 18 18"><circle cx="5" cy="6" r="1.500" fill="#1f74c8"/><path d="M13 5c1 3 0 6-3 8" stroke="#1f74c8" fill="none" stroke-width="2"/></symbol>
</defs>
</svg>

<header class="title">
  <svg class="tlogo"><use href="#nx"/></svg>
  <span class="ttxt">NX 10 - 加工 - [JT-SXB-3G.prt（修改的）]</span>
  <span class="brand">SIEMENS</span>
  <span class="wbtn">▁</span><span class="wbtn">❐</span><span class="wbtn close">✕</span>
</header>

<nav class="menu">
  <svg class="mic"><use href="#mnu"/></svg>
  <span class="mi">文件(F)</span><span class="mi">编辑(E)</span><span class="mi">视图(V)</span><span class="mi">插入(S)</span><span class="mi">格式(R)</span><span class="mi">工具(T)</span><span class="mi">装配(A)</span><span class="mi">信息(I)</span><span class="mi wide">分析(L)</span><span class="mi w67">首选项(P)</span><span class="mi w91">洁强工具v2.59</span><span class="mi w56">窗口(O)</span><span class="mi w60">GC工具箱</span><span class="mi">帮助(H)</span>
  <span class="dctl"><b>▁</b><b>❐</b><b class="off">✕</b></span>
</nav>

<section class="tbar">
  <div class="row">
    <div class="grp w437"><i class="gr"></i><svg class="t"><use href="#nx"/></svg><span class="stl">启动</span><i class="ar"></i><svg class="t ml"><use href="#doc"/></svg><svg class="t"><use href="#fold"/></svg><svg class="t"><use href="#save"/></svg><i class="sep"></i><svg class="t"><use href="#undo"/></svg><i class="ar"></i><i class="sep"></i><svg class="t ml"><use href="#blk"/></svg><i class="ar"></i><i class="sep"></i><svg class="t ml"><use href="#info"/></svg><i class="sep"></i><span class="find"><span>查找命令</span><svg class="fmag" viewBox="0 0 16 16"><circle cx="10" cy="6" r="4.500" fill="#fff" stroke="#555"/><path d="M7 9l-5 6" stroke="#555" stroke-width="2"/></svg></span><i class="ar dn"></i></div>
    <div class="grp w258"><i class="gr"></i><svg class="t"><use href="#fit"/></svg><i class="ar"></i><svg class="t"><use href="#shade"/></svg><i class="ar"></i><svg class="t"><use href="#cube"/></svg><i class="ar"></i><svg class="t"><use href="#secO"/></svg><svg class="t"><use href="#secG"/></svg><i class="ar"></i><svg class="t"><use href="#blk"/></svg><i class="ar"></i></div>
    <div class="grp w79"><svg class="t"><use href="#plane"/></svg><svg class="t"><use href="#plane2"/></svg><i class="ar dn"></i></div>
    <div class="grp w85"><i class="gr"></i><svg class="t"><use href="#lay"/></svg><svg class="t"><use href="#ptree"/></svg><i class="ar"></i></div>
    <div class="grp w68"><svg class="t"><use href="#hand"/></svg><svg class="t"><use href="#pal"/></svg></div>
    <div class="grp w49"><svg class="t"><use href="#dia"/></svg><i class="ar"></i></div>
    <div class="grp w91"><i class="gr"></i><svg class="t"><use href="#wcs"/></svg><i class="ar"></i><svg class="t"><use href="#rul"/></svg><i class="ar dn"></i></div>
  </div>
  <div class="row">
    <div class="grp w269"><i class="gr"></i><svg class="t"><use href="#wr"/></svg><svg class="t"><use href="#sc"/></svg><svg class="t"><use href="#cp"/></svg><svg class="t"><use href="#cp"/></svg><svg class="t"><use href="#cl"/></svg><svg class="t"><use href="#xx"/></svg><svg class="t"><use href="#ii"/></svg><svg class="t"><use href="#fl"/></svg><i class="ar dn"></i></div>
    <div class="grp w198"><i class="gr"></i><svg class="t"><use href="#ln"/></svg><svg class="t"><use href="#sp"/></svg><svg class="t"><use href="#ck"/></svg><svg class="t"><use href="#sd"/></svg><svg class="t"><use href="#ck2"/></svg><svg class="t"><use href="#bk"/></svg></div>
    <div class="grp w111"><svg class="t"><use href="#rob"/></svg><svg class="t"><use href="#pgb"/></svg><svg class="t"><use href="#clk"/></svg><i class="ar dn"></i></div>
    <div class="grp w53"><i class="gr"></i><svg class="t"><use href="#sfl"/></svg><span class="more">»</span></div>
    <div class="grp w98"><i class="gr"></i><svg class="t"><use href="#mch"/></svg><svg class="t"><use href="#stk"/></svg><span class="more">»</span></div>
    <div class="grp w210"><i class="gr"></i><svg class="t"><use href="#bot"/></svg><svg class="t"><use href="#elb"/></svg><svg class="t"><use href="#lmp"/></svg><svg class="t"><use href="#arrp"/></svg><svg class="t"><use href="#fit2"/></svg><svg class="t"><use href="#lst"/></svg><i class="ar dn"></i></div>
    <div class="grp w182"><i class="gr"></i><svg class="t"><use href="#ct1"/></svg><svg class="t"><use href="#ct2"/></svg><i class="ar"></i><svg class="t"><use href="#ct3"/></svg><i class="ar"></i><svg class="t"><use href="#nz"/></svg><i class="ar"></i><i class="ar dn"></i></div>
    <div class="grp grow"><i class="gr"></i><svg class="t"><use href="#grp1"/></svg><svg class="t"><use href="#grp2"/></svg><i class="sep"></i><svg class="t"><use href="#bino"/></svg><svg class="t"><use href="#tag1"/></svg><svg class="t"><use href="#tag2"/></svg><svg class="t"><use href="#tag3"/></svg><svg class="t"><use href="#tag4"/></svg><i class="sep"></i><svg class="t"><use href="#mag"/></svg><i class="sep"></i><svg class="t"><use href="#bigx"/></svg><i class="ar dn"></i></div>
  </div>
  <div class="row">
    <div class="grp w486"><i class="gr"></i><svg class="t"><use href="#pnc"/></svg><svg class="t"><use href="#ptab"/></svg><svg class="t"><use href="#to"/></svg><svg class="t"><use href="#lse"/></svg><svg class="t"><use href="#wdg"/></svg><svg class="t"><use href="#par"/></svg><svg class="t"><use href="#tiger"/></svg><svg class="t"><use href="#shl"/></svg><svg class="t"><use href="#wrb"/></svg><svg class="t"><use href="#numtr"/></svg><svg class="t"><use href="#mtr"/></svg><svg class="t"><use href="#ud"/></svg><svg class="t"><use href="#lsb"/></svg><svg class="t"><use href="#ln"/></svg><svg class="t"><use href="#corner"/></svg><i class="ar dn"></i></div>
    <div class="grp w178"><i class="gr"></i><svg class="t"><use href="#star1"/></svg><svg class="t"><use href="#star2"/></svg><svg class="t"><use href="#star3"/></svg><svg class="t"><use href="#star4"/></svg><svg class="t"><use href="#star5"/></svg><i class="ar dn"></i></div>
    <div class="grp w373"><i class="gr"></i><svg class="t"><use href="#bx5"/></svg><i class="ar wa"></i><svg class="t"><use href="#bx4"/></svg><i class="ar wa"></i><svg class="t"><use href="#bx2"/></svg><svg class="t"><use href="#bx3"/></svg><i class="ar wa"></i><svg class="t"><use href="#bx3"/></svg><i class="ar wa"></i><svg class="t"><use href="#bx2"/></svg><i class="ar wa"></i><svg class="t"><use href="#bx3"/></svg><svg class="t"><use href="#bx4"/></svg><svg class="t"><use href="#bx5"/></svg><i class="ar"></i><i class="ar dn"></i></div>
    <div class="grp w238"><i class="gr"></i><svg class="t"><use href="#crv1"/></svg><svg class="t"><use href="#crv2"/></svg><svg class="t"><use href="#crv3"/></svg><svg class="t"><use href="#crv4"/></svg><svg class="t"><use href="#crv5"/></svg><svg class="t"><use href="#crv6"/></svg><svg class="t"><use href="#crv7"/></svg><i class="ar dn"></i></div>
  </div>
</section>

<section class="status">
  <span class="st1">为直接输入选择或是拖动手柄；使用 Alt 键来关闭捕捉功能</span>
  <span class="st2">平移原点</span>
  <span class="st3"></span>
  <span class="st4"><svg class="sti" viewBox="0 0 16 16"><path d="M1 1h14v14H1z" fill="#fff" stroke="#777" stroke-dasharray="3 7"/><rect x="4" y="3" width="8" height="10" fill="#3a80d8" stroke="#333"/></svg></span>
</section>

<main class="main">
  <aside class="rail">
    <div class="railtop"><svg class="rgear"><use href="#gear"/></svg></div>
    <div class="tabs">
      <div class="tab t1"><svg viewBox="0 0 24 24"><path d="M2 2h8v9H2z" fill="#f0c030" stroke="#a07a10"/><path d="M8 8h8v8H8z" fill="#f5d860" stroke="#a07a10"/><path d="M5 12v10M5 17h8M14 3h9" stroke="#1430a0"/><path d="M15 17h7v6h-7z" fill="#f5d860" stroke="#a07a10"/></svg></div>
      <div class="tab t2"><svg viewBox="0 0 24 24"><path d="M4 2l7 6-7 6zM20 2l-7 6 7 6z" fill="#1420c0"/><rect x="1" y="15" width="9" height="8" fill="#f5f060" stroke="#555"/><path d="M13 12l10 11H13z" fill="#c01818" stroke="#555"/></svg></div>
      <div class="tab t3"><svg viewBox="0 0 24 24"><path d="M1 4c0-3 9-3 9 0v8c0 3-9 3-9 0z" fill="#d88090" stroke="#805060"/><path d="M5 13v9M5 18h7M12 10h10" stroke="#1430a0"/><circle cx="17" cy="18" r="5" fill="#fff" stroke="#b04060"/><circle cx="17" cy="18" r="2" fill="#b04060"/></svg></div>
      <div class="tab act"><svg viewBox="0 0 24 24"><rect x="2" y="0" width="5" height="12" fill="#38a0e8"/><path d="M7 3h9M7 5h8M7 8h7" stroke="#38a0e8"/><path d="M14 12h8M5 13v10M5 18h7" stroke="#1430a0"/><path d="M14 16v7h8z" fill="#fff" stroke="#1430a0"/></svg></div>
      <div class="tab t5"><svg viewBox="0 0 24 24"><rect x="1" y="1" width="18" height="14" fill="#f0c880"/><path d="M1 5h18M1 9h18M6 1v14M12 1v14" stroke="#e08050"/><path d="M6 14h18v8H10z" fill="#1f7fd0"/><path d="M8 14l12 0 3 4H10z" fill="#f08020"/></svg></div>
      <div class="tab t6"><svg viewBox="0 0 24 24"><rect x="1" y="8" width="14" height="14" fill="#bbb" stroke="#444"/><path d="M5 8v14M10 8v14" stroke="#555"/><rect x="16" y="1" width="6" height="6" fill="#f08020" stroke="#b03010"/><path d="M8 6c2-3 4-3 7-3" stroke="#e04020" fill="none" stroke-width="1.500"/><path d="M16 14h6M16 18h6v4" stroke="#444"/></svg></div>
      <div class="tab t7"><svg viewBox="0 0 24 24"><path d="M1 5l3-3h5v20H1z" fill="#f07020"/><path d="M9 4l3-3h4v21H9z" fill="#30b030"/><path d="M16 4l3-3h4v19l-3 2h-4z" fill="#3a90e8"/><path d="M3 9h4M11 9h3M18 9h3M18 13h3" stroke="#fff"/></svg></div>
      <div class="tab t8"><svg viewBox="0 0 24 24"><circle cx="9" cy="14" r="8" fill="url(#gb)"/><path d="M8 8h2.500v2H8zM8 12h2.500v7H8z" fill="#fff"/><path d="M13 5c4 1 6 4 7 8M15 1c5 1 8 5 9 11" stroke="#2a7fd0" stroke-width="2" fill="none"/></svg></div>
      <div class="tab t9"><svg viewBox="0 0 24 24"><path d="M4 1h11l5 5v17H4z" fill="#fff" stroke="#3a6ec8"/><circle cx="12" cy="15" r="5" fill="#4a9a50"/><path d="M8 15a4 4 0 018 0z" fill="#2a78d0"/></svg></div>
      <div class="tab t10"><svg viewBox="0 0 24 24"><circle cx="12" cy="12" r="10.500" fill="#e8f0fa" stroke="#667"/><circle cx="12" cy="12" r="8" fill="#dfeaf6" stroke="#99a"/><path d="M12 5v7h6" stroke="#111" stroke-width="1.500" fill="none"/></svg></div>
      <div class="tab t11"><svg viewBox="0 0 24 24"><rect x="2" y="1" width="8" height="22" fill="url(#gr)"/><path d="M11 6l11 17" stroke="#111" stroke-width="2.500"/><circle cx="11" cy="5" r="2" fill="#fff"/></svg></div>
      <div class="tab stub"></div>
      <div class="scb"><b class="dis bart">▲</b><b class="dis">▲</b><b>▼</b><b class="barb">▼</b></div>
    </div>
  </aside>

  <div class="panel">
    <div class="phead"><span>工序导航器 － 几何</span><i class="pmax"></i></div>
    <div class="tbl">
      <div class="r hd"><div>名称</div><div>刀轨</div><div>刀具</div><div>刀. .</div><div>时间</div><div>余量</div><div>进给</div><div>速度</div><div></div></div>
      <div class="r"><div class="m">GEOMETRY</div><div></div><div></div><div></div><div class="m">01:44:23</div><div></div><div></div><div></div><div></div></div>
      <div class="r"><div class="m l1 tv"><svg class="n16"><use href="#fld"/></svg><span class="cjk">未用项</span></div><div></div><div></div><div></div><div class="m">00:00:0</div><div></div><div></div><div></div><div></div></div>
      <div class="r"><div class="m l1 tv"><i class="ex">+</i><svg class="n16"><use href="#mcs"/></svg>MCS-A</div><div></div><div></div><div></div><div class="m">01:21:5</div><div></div><div></div><div></div><div></div></div>
      <div class="r"><div class="m l1 tv"><i class="ex">+</i><svg class="n16"><use href="#mcs"/></svg>MCS-B</div><div></div><div></div><div></div><div class="m">00:06:1</div><div></div><div></div><div></div><div></div></div>
      <div class="r sel"><div class="m l1 tv"><i class="ex">−</i><svg class="n16"><use href="#mcs"/></svg><span class="selt">MCS-C</span></div><div></div><div></div><div></div><div class="m">00:16:1</div><div></div><div></div><div></div><div></div></div>
      <div class="r"><div class="m l2 tv"><svg class="n16"><use href="#wp"/></svg>W-C</div><div></div><div></div><div></div><div class="m">00:00:0</div><div></div><div></div><div></div><div></div></div>
      <div class="r"><div class="m l3 tv"><svg class="n14"><use href="#ok"/></svg><svg class="n16"><use href="#opm"/></svg>C2</div><div class="cc"><svg class="n14"><use href="#ok"/></svg></div><div class="m">ZXZ4.0</div><div class="m">2</div><div class="m">00:00:4</div><div></div><div></div><div></div><div></div></div>
      <div class="r"><div class="m l3 tv"><svg class="n14"><use href="#ok"/></svg><svg class="n16"><use href="#opm"/></svg>C3</div><div class="cc"><svg class="n14"><use href="#ok"/></svg></div><div class="m">ZT4.30</div><div class="m">3</div><div class="m">00:02:4</div><div></div><div></div><div></div><div></div></div>
      <div class="r"><div class="m l3 tv"><svg class="n14"><use href="#ok"/></svg><svg class="n16"><use href="#opm"/></svg>CC4</div><div class="cc"><svg class="n14"><use href="#ok"/></svg></div><div class="m">GSZ8.L35</div><div class="m">4</div><div class="m">00:01:2</div><div></div><div></div><div></div><div></div></div>
      <div class="r"><div class="m l3 tv"><svg class="n14"><use href="#ok"/></svg><svg class="n16"><use href="#opm"/></svg>CCC6</div><div class="cc"><svg class="n14"><use href="#ok"/></svg></div><div class="m">ZT8L115</div><div class="m">6</div><div class="m">00:04:5</div><div></div><div></div><div></div><div></div></div>
      <div class="r"><div class="m l3 tv"><svg class="n14"><use href="#ok"/></svg><svg class="n16"><use href="#opm"/></svg>C8</div><div class="cc"><svg class="n14"><use href="#ok"/></svg></div><div class="m">ZT8.5</div><div class="m">8</div><div class="m">00:00:3</div><div></div><div></div><div></div><div></div></div>
      <div class="r"><div class="m l3 tv"><svg class="n14"><use href="#ok"/></svg><svg class="n16"><use href="#opm"/></svg>C7</div><div class="cc"><svg class="n14"><use href="#ok"/></svg></div><div class="m">DJD12.</div><div class="m">7</div><div class="m">00:00:2</div><div></div><div></div><div></div><div></div></div>
      <div class="r"><div class="m l3 tv"><svg class="n14"><use href="#ok"/></svg><svg class="n16"><use href="#opm"/></svg>CC7</div><div class="cc"><svg class="n14"><use href="#ok"/></svg></div><div class="m">DJD12.</div><div class="m">7</div><div class="m">00:00:0</div><div></div><div></div><div></div><div></div></div>
      <div class="r"><div class="m l3 tv"><svg class="n14 bl"><use href="#bulb"/></svg><svg class="n16"><use href="#opc"/></svg>C1</div><div class="cc"><svg class="n14"><use href="#ok"/></svg></div><div class="m">XD20</div><div class="m">1</div><div class="m">00:00:1</div><div></div><div></div><div></div><div></div></div>
      <div class="r"><div class="m l3 tv"><svg class="n14 bl"><use href="#bulb"/></svg><svg class="n16"><use href="#opf"/></svg>FLOOR_...</div><div class="cc"><svg class="n14"><use href="#ok"/></svg></div><div class="m">XD20</div><div class="m">1</div><div class="m">00:00:5</div><div></div><div></div><div></div><div></div></div>
      <div class="r"><div class="m l3 tv"><svg class="n14"><use href="#ok"/></svg><svg class="n16"><use href="#opm"/></svg>CC7_COPY</div><div class="cc"><svg class="n14"><use href="#ok"/></svg></div><div class="m">DJD12.</div><div class="m">7</div><div class="m">00:00:0</div><div></div><div></div><div></div><div></div></div>
      <div class="r"><div class="m l3 tv"><svg class="n14 bl"><use href="#bulb"/></svg><svg class="n16"><use href="#opc"/></svg>C1_COPY</div><div class="cc"><svg class="n14"><use href="#ok"/></svg></div><div class="m">XD20</div><div class="m">1</div><div class="m">00:00:1</div><div></div><div></div><div></div><div></div></div>
      <div class="r"><div class="m l3 tv"><svg class="n14 bl"><use href="#bulb"/></svg><svg class="n16"><use href="#opc"/></svg>C1_COP...</div><div class="cc"><svg class="n14"><use href="#ok"/></svg></div><div class="m">XD20</div><div class="m">1</div><div class="m">00:00:1</div><div></div><div></div><div></div><div></div></div>
      <div class="r"><div class="m l3 tv"><svg class="n14 bl"><use href="#bulb"/></svg><svg class="n16"><use href="#opf"/></svg>FLOOR_...</div><div class="cc"><svg class="n14"><use href="#ok"/></svg></div><div class="m">XD20</div><div class="m">1</div><div class="m">00:00:4</div><div></div><div></div><div></div><div></div></div>
      <div class="r"><div class="m l3 tv"><svg class="n14 bl"><use href="#bulb"/></svg><svg class="n16"><use href="#opc"/></svg>C1_COPY_1</div><div class="cc"><svg class="n14"><use href="#ok"/></svg></div><div class="m">XD20</div><div class="m">1</div><div class="m">00:00:1</div><div></div><div></div><div></div><div></div></div>
      <div class="r"><div class="m l3 tv"><svg class="n14 bl"><use href="#bulb"/></svg><svg class="n16"><use href="#opf"/></svg>FLOOR_...</div><div class="cc"><svg class="n14"><use href="#ok"/></svg></div><div class="m">XD20</div><div class="m">1</div><div class="m">00:00:4</div><div></div><div></div><div></div><div></div></div>
      <div class="r"><div class="m l3 tv"><svg class="n14"><use href="#ok"/></svg><svg class="n16"><use href="#opm"/></svg>SPOT_D...</div><div class="cc"><svg class="n14"><use href="#ok"/></svg></div><div class="m">ZT4.3</div><div class="m">2</div><div class="m">00:00:2</div><div></div><div></div><div></div><div></div></div>
      <div class="r"><div></div><div></div><div></div><div></div><div></div><div></div><div></div><div></div><div></div></div>
      <div class="r"><div></div><div></div><div></div><div></div><div></div><div></div><div></div><div></div><div></div></div>
      <div class="r"><div></div><div></div><div></div><div></div><div></div><div></div><div></div><div></div><div></div></div>
      <div class="r"><div></div><div></div><div></div><div></div><div></div><div></div><div></div><div></div><div></div></div>
      <div class="r"><div></div><div></div><div></div><div></div><div></div><div></div><div></div><div></div><div></div></div>
      <div class="r"><div></div><div></div><div></div><div></div><div></div><div></div><div></div><div></div><div></div></div>
      <i class="vdot v1"></i><i class="vdot v2"></i><i class="blackline"></i>
    </div>
    <div class="hsb"><i class="hl"></i><i class="thumb"></i><i class="hl2"></i></div>
    <div class="pfoot"></div>
  </div>

  <div class="gfx">
    <svg class="scene" viewBox="0 0 707 625">
      <ellipse cx="315" cy="251" rx="161.500" ry="165" fill="none" stroke="#d4db62" stroke-width="2.500" stroke-dasharray="9.500 7.500"/>
      <g transform="translate(147 147) scale(.33333)">
        <path d="M178 95L218 62 425 60 392 100Z" fill="#f2f2f2" stroke="#888"/>
        <path d="M392 100L425 60 420 100 384 155Z" fill="#6e6e6e"/>
        <path d="M385 180L415 153 518 208 497 238Z" fill="#fff" stroke="#777"/>
        <circle cx="425" cy="175" r="5" fill="#555"/><circle cx="460" cy="190" r="7" fill="#555"/><circle cx="492" cy="207" r="5" fill="#555"/><circle cx="448" cy="205" r="4" fill="#555"/>
        <path d="M548 178L582 145 712 318 680 352Z" fill="#0a0ae0"/>
        <path d="M548 178L582 145 592 155 565 178Z" fill="#fff"/>
        <path d="M600 388L640 378 647 472 622 492Z" fill="#1616c8"/>
        <ellipse cx="620" cy="420" rx="3" ry="8" fill="#fff"/><ellipse cx="632" cy="430" rx="3" ry="8" fill="#fff"/>
        <path d="M125 245L210 182 178 95 392 100 382 152 497 238 543 178 682 340 600 388 612 470 625 640 225 606 190 470 172 305Z" fill="#adadad" stroke="#888"/>
        <path d="M125 245L210 182 200 182Z" fill="#1616c8"/>
        <circle cx="335" cy="455" r="66" fill="#1f2127"/>
        <path d="M298 400A70 70 0 0 0 320 522L350 505C320 510 290 470 298 400Z" fill="#f5f5f5"/>
        <g fill="#fff" stroke="#444" stroke-width="2">
          <circle cx="212" cy="118" r="11"/><circle cx="242" cy="130" r="7"/><circle cx="290" cy="125" r="14"/><circle cx="362" cy="113" r="10"/>
          <circle cx="552" cy="212" r="10"/><circle cx="561" cy="241" r="8"/><circle cx="590" cy="281" r="15"/><circle cx="620" cy="325" r="8"/><circle cx="645" cy="343" r="11"/>
          <circle cx="380" cy="348" r="11"/><circle cx="365" cy="380" r="11"/><circle cx="282" cy="383" r="10"/><circle cx="234" cy="406" r="10"/><circle cx="418" cy="400" r="9"/><circle cx="420" cy="455" r="11"/><circle cx="299" cy="567" r="9"/><circle cx="348" cy="567" r="9"/>
        </g>
        <circle cx="454" cy="453" r="10" fill="#1616c8" stroke="#222"/>
        <g fill="none" stroke="#d8d8d8" stroke-width="7">
          <path d="M334 455L302 240"/><path d="M0 465C100 465 240 460 334 455"/><path d="M334 455L262 522"/>
          <path d="M302 245C200 255 110 350 130 470"/><path d="M302 245C250 300 250 420 262 522"/><path d="M128 470C110 510 160 525 262 520"/>
        </g>
        <path d="M280 105L295 105 318 185H275Z" fill="url(#gy)"/>
        <path d="M-5 467L72 445 72 487Z" fill="url(#gy)"/>
        <path d="M212 565L215 520 258 532Z" fill="url(#gy)"/>
        <g fill="url(#gy)" stroke="#b08810"><circle cx="172" cy="315" r="11"/><circle cx="262" cy="353" r="11"/><circle cx="141" cy="505" r="11"/></g>
        <circle cx="334" cy="457" r="20" fill="url(#go)"/>
        <text class="lb" x="248" y="88" fill="#2eaa3a">YC</text>
        <text class="lb s" x="305" y="152" fill="#2eaa3a">YM</text>
        <text class="lb" x="38" y="510" fill="#1c4ae8">ZM</text>
        <text class="lb" x="168" y="590" fill="#d02828">XC</text>
        <text class="lb s" x="235" y="578" fill="#d02828">XM</text>
      </g>
      <text class="lb2" x="122" y="309" fill="#1c4ae8">ZC</text>
      <ellipse cx="201" cy="349" rx="162.500" ry="164" fill="none" stroke="#d4db62" stroke-width="2.500" stroke-dasharray="9.500 7.500"/>
      <g>
        <path d="M52 570L38 581M52 570L90 570M52 570L58 612" stroke="#2a8a30" fill="none"/>
        <path d="M53 571L38 582" stroke="#2030d8"/><path d="M60 590L58 612" stroke="#d02020" stroke-width="1.500"/>
        <path d="M46 574L53 566 75 571 74 590 53 597 46 590Z" fill="#c8c8c8"/><path d="M46 574L69 578 74 571M69 578V596" stroke="#999" fill="none"/>
        <circle cx="52" cy="569" r="3" fill="#f0f0f0"/>
        <text class="tri" x="88" y="572" fill="#2eaa3a">Y</text><text class="tri" x="36" y="585" fill="#2030d8">Z</text><text class="tri" x="54" y="613" fill="#d02020">X</text>
      </g>
    </svg>
    <div class="coord">
      <i class="cgrip"></i>
      <div class="crows">
        <label>X<span>-37.7145</span></label>
        <label>Y<span>-95.4830'</span></label>
        <label>Z<span class="rt">0.00000(</span></label>
      </div>
    </div>
    <i class="edge"></i>
  </div>

  <div class="dlg">
    <div class="dtitle"><span class="dg"><svg><use href="#gear"/></svg></span><b>MCS 铣削</b><span class="dx">✕</span></div>
    <div class="dbody">
      <div class="sh"><span>机床坐标系</span><i class="up"></i></div>
      <div class="sb s1">
        <div class="spec"><svg class="ok"><use href="#ok"/></svg><span class="lbl2">指定 MCS</span><span class="bw sm"><svg viewBox="0 0 16 16"><use href="#triad"/></svg></span><span class="sb2 org"><svg viewBox="0 0 16 16"><use href="#mcs"/></svg><i class="drop o"></i></span></div>
        <div class="det"><span>细节</span><i class="dnc"></i></div>
      </div>
      <div class="sh"><span>参考坐标系</span><i class="down"></i></div>
      <div class="sh"><span>安全设置</span><i class="up"></i></div>
      <div class="sb s2">
        <div class="fr h1"><span class="lbl">安全设置选项</span><span class="sel2"><span>圆柱</span><i class="drop"></i></span></div>
        <div class="fr h2"><svg class="ok"><use href="#ok"/></svg><span class="lbl2">指定点</span><span class="bw sm"><svg viewBox="0 0 24 24"><use href="#plus"/></svg></span><span class="sb2"><svg viewBox="0 0 24 24"><use href="#cc"/></svg><i class="drop"></i></span></div>
        <div class="fr h3"><svg class="ok"><use href="#ok"/></svg><span class="lbl2">指定矢量</span><span class="bw sm"><svg viewBox="0 0 24 24"><path d="M4 20L20 4" stroke="#111"/><path d="M4 10l10 10M14 4h6v6M4 14v6h6" stroke="#1430d0" stroke-width="2" fill="none"/></svg></span><span class="bw sm g2"><svg viewBox="0 0 24 24"><path d="M12 20V4M8 8l4-4 4 4" stroke="#d01010" fill="none" stroke-width="1.500"/><path d="M2 15c2 5 6 6 8 3" stroke="#e88020" fill="none" stroke-width="1.500"/></svg></span><span class="sb2"><svg viewBox="0 0 24 24"><path d="M8 22V3M4 9l4-6 4 6" stroke="#d01010" fill="none" stroke-width="1.500"/><path d="M12 14h10M14 17h6M16 20h2M17 8v6" stroke="#c020c0"/></svg><i class="drop"></i></span></div>
        <div class="fr h4"><span class="lbl">半径</span><span class="num">180.0000</span></div>
        <div class="fr h5"><span class="lbl">显示</span><span class="bw lg"><svg viewBox="0 0 24 24"><path d="M2 5l4-4 11 9 4 8-8-3z" fill="#1040d8"/><ellipse cx="18" cy="14" rx="3" ry="5" transform="rotate(-40 18 14)" fill="#f0e040" stroke="#1a2a80"/></svg></span></div>
      </div>
      <div class="sh"><span>下限平面</span><i class="down"></i></div>
      <div class="sh"><span>避让</span><i class="down"></i></div>
      <div class="sh"><span>描述</span><i class="down"></i></div>
      <div class="sh"><span>布局和图层</span><i class="down"></i></div>
      <div class="dsep"></div>
      <div class="dfoot"><span class="btn okb">确定</span><span class="btn">取消</span></div>
    </div>
    <div class="dbot"></div>
  </div>
</main>

<section class="bbar">
  <div class="grp w147"><i class="gr"></i><svg class="t"><use href="#tr1"/></svg><svg class="t"><use href="#tr2"/></svg><svg class="t"><use href="#tr3"/></svg><svg class="t"><use href="#tr4"/></svg><i class="ar dn"></i></div>
  <div class="grp w256"><i class="gr"></i><svg class="t"><use href="#rain"/></svg><i class="ar wa"></i><svg class="t"><use href="#cross"/></svg><i class="ar wa"></i><svg class="t"><use href="#blkup"/></svg><i class="ar wa"></i><svg class="t"><use href="#cyl"/></svg><svg class="t"><use href="#bcube"/></svg><svg class="t"><use href="#mesh"/></svg><i class="ar"></i><i class="ar dn"></i></div>
</section>

<section class="selbar">
  <span class="cb1"><i class="dg1"></i></span>
  <span class="cb2"><span>仅在工作部件内</span><i class="drop"></i></span>
  <svg class="u"><use href="#s-wr"/></svg><i class="sep"></i>
  <svg class="u fn"><use href="#fun"/></svg><svg class="u fn redb"><use href="#fun2"/></svg><i class="ar"></i><svg class="u"><use href="#rot"/></svg><svg class="u"><use href="#cur2"/></svg><i class="sep"></i>
  <svg class="u"><use href="#hex"/></svg><svg class="u"><use href="#sqd"/></svg><i class="ar"></i><i class="sep"></i>
  <svg class="u"><use href="#pcb"/></svg><svg class="u bxd"><use href="#blu"/></svg><i class="sep"></i>
  <svg class="u bxd"><use href="#mid"/></svg><svg class="u bxd"><use href="#sl"/></svg><svg class="u bxd"><use href="#sl2"/></svg><svg class="u"><use href="#tg"/></svg><svg class="u"><use href="#ft"/></svg><svg class="u bxd"><use href="#cc"/></svg><svg class="u"><use href="#ccq"/></svg><svg class="u bxd"><use href="#plus"/></svg><svg class="u"><use href="#sl2"/></svg><svg class="u"><use href="#ball"/></svg><i class="sep"></i><svg class="u"><use href="#gridi"/></svg>
</section>

<footer class="task">
  <span class="orb"><svg viewBox="0 0 40 40"><circle cx="20" cy="20" r="18" fill="url(#gb)" stroke="#123"/><path d="M10 13c4-3 7 1 9-1l-2 7c-3 1-5-2-9 0z" fill="#f05030"/><path d="M20 11c4 2 6 0 9-1l-2 7c-3 2-6 1-9 0z" fill="#70c030"/><path d="M8 21c4-2 6 1 9 1l-2 7c-3-1-5-2-9 0z" fill="#3a9af0"/><path d="M18 22c3 1 6 2 9 0l-2 7c-3 2-6 0-9 0z" fill="#f0c020"/></svg></span>
  <span class="tb act1"><svg viewBox="0 0 24 24"><use href="#nx"/></svg></span>
  <span class="tb"><svg viewBox="0 0 24 24"><rect x="1" y="0" width="22" height="24" fill="#e03030"/><path d="M4 20L12 3l8 17h-4l-4-8-4 8z" fill="#8a0000"/></svg></span>
  <span class="tb"><svg viewBox="0 0 24 24"><rect x="1" y="1" width="22" height="22" rx="3" fill="#1a7ae8"/><path d="M5 8l3 9 4-8 4 8 3-9" stroke="#fff" stroke-width="2" fill="none"/></svg></span>
  <span class="tb grn"><svg viewBox="0 0 24 24"><circle cx="12" cy="12" r="10" fill="none" stroke="#fff" stroke-width="2.500"/><path d="M5 10h14M5 15h14" stroke="#fff" stroke-width="2"/><path d="M3 18C6 6 18 2 22 5" stroke="#18a018" stroke-width="1.500" fill="none"/></svg></span>
  <span class="tray"><span class="ch">CH</span><svg class="ts"><use href="#sglogo"/></svg><span class="ex2">▾</span></span>
  <span class="temp"><span>39℃</span><span>CPU温度</span></span>
  <span class="tri-up"></span>
  <svg class="net" viewBox="0 0 24 20"><rect x="7" y="3" width="14" height="11" fill="#dfe8f0" stroke="#222"/><path d="M3 1v10M1 3h4M11 17h6" stroke="#222"/></svg>
  <svg class="spk" viewBox="0 0 24 20"><path d="M2 6h4l6-5v18l-6-5H2z" fill="#dfe8f0" stroke="#444"/><path d="M15 6c2 2 2 6 0 8M18 3c3 3 3 11 0 14" stroke="#eee" fill="none"/></svg>
  <span class="clock"><span>9:40</span><span>2020/6/21</span></span>
  <span class="showd"></span>
</footer>

<div class="wm" aria-hidden="true">
  <svg class="wmhex" viewBox="0 0 74 86"><path d="M37 0l37 20v46L37 86 0 66V20z" fill="#5fb0e6" opacity=".55"/><path d="M37 22l20 11v22L37 66 17 55V33z" fill="none" stroke="#d8d8d8" stroke-width="4" opacity=".7"/><path d="M17 33l20 11 20-11M37 44v22" fill="none" stroke="#d8d8d8" stroke-width="3" opacity=".6"/></svg>
  <span class="wmt">3D世界网</span>
  <span class="wmu">WWW.3DSJW.COM</span>
</div>
<div class="ime"><svg class="imes"><use href="#sglogo"/></svg><b>英</b><svg class="ii1"><use href="#icom"/></svg><svg class="ii1"><use href="#iface"/></svg><svg class="ii1"><use href="#imic"/></svg><svg class="ii1"><use href="#ikey"/></svg><svg class="ii1"><use href="#iper"/></svg><svg class="ii1"><use href="#ishr"/></svg><svg class="ii1"><use href="#igrd"/></svg></div>
<i class="sbar"></i>
</body>
</html>
```
FILE: styles.css
```css
*{box-sizing:border-box}
html,body{margin:0;padding:0}
body{width:1440px;height:900px;overflow:hidden;position:relative;display:flex;flex-direction:column;font:12px "Noto Sans CJK SC","Liberation Sans",sans-serif;color:#111;background:#d8d8d8}
.defs{position:absolute;width:0;height:0}
i{font-style:normal}

.title{height:26px;flex:none;background:#1b1b1b;border-top:3px solid #4b4b4b;display:flex;align-items:center;color:#ededed;padding-right:3px}
.tlogo{width:20px;height:20px;margin-left:2px}
.ttxt{margin-left:1px;font-size:13px;letter-spacing:.2px;white-space:nowrap;padding-bottom:1px}
.brand{margin-left:auto;margin-right:24px;font:bold 12px "Liberation Sans",sans-serif;letter-spacing:.6px;color:#fff}
.wbtn{width:19px;height:19px;margin-left:3px;border-radius:3px;border:1px solid #777;background:linear-gradient(#888,#333);color:#fff;font-size:11px;display:flex;align-items:center;justify-content:center}
.wbtn.close{background:linear-gradient(#f09070,#d82c10);border-color:#eee}

.menu{height:23px;flex:none;background:#e5e5e5;display:flex;align-items:center;padding:0 0 3px 6px;border-bottom:1px solid #cfcfcf}
.mic{width:18px;height:18px;flex:none;margin-right:5px}
.mi{width:55px;flex:none;font-size:12px;letter-spacing:.2px;white-space:nowrap}
.mi.wide{width:66px}.mi.w67{width:67px}.mi.w91{width:91px}.mi.w56{width:56px}.mi.w60{width:60px}
.dctl{margin-left:auto;margin-right:4px;display:flex;gap:3px}
.dctl b{width:16px;height:17px;border:1px solid #888;border-radius:3px;font:10px "Liberation Sans",sans-serif;display:flex;align-items:center;justify-content:center;background:linear-gradient(#f2f2f2,#d0d0d0);color:#555}
.dctl .off{color:#bbb;border-color:#bbb}

.tbar{height:103px;flex:none;display:flex;flex-direction:column;background:#d4d4d4}
.row{display:flex;height:34px;flex:none;padding-bottom:1px}
.row:last-child{height:35px}
.grp{display:flex;align-items:center;height:33px;flex:none;background:linear-gradient(#e6e6e6,#d2d2d2);border-right:1px solid #f4f4f4;border-top:1px solid #efefef;padding-left:4px;overflow:hidden}
.grow{flex:1}
.w437{width:437px}.w258{width:258px}.w79{width:79px}.w85{width:85px}.w68{width:68px}.w49{width:49px}.w91{width:91px}
.w269{width:269px}.w198{width:198px}.w111{width:111px}.w53{width:53px}.w98{width:98px}.w210{width:210px}.w182{width:182px}
.w486{width:486px}.w178{width:178px}.w373{width:373px}.w238{width:238px}.w147{width:147px}.w256{width:256px}
.gr{width:3px;height:24px;margin-right:1px;flex:none;background-image:radial-gradient(#999 45%,transparent 50%);background-size:3px 3px}
.t{width:24px;height:24px;margin:0 3.500px;flex:none}
.ml{margin-left:5px}
.stl{width:25px;flex:none;font-size:12px}
.ar{width:10px;height:8px;flex:none;position:relative}
.ar.wa{width:12px}
.ar::after{content:"";position:absolute;left:2px;top:2px;border:3px solid transparent;border-top:4px solid #111;border-bottom:0}
.ar.dn::after{top:5px}
.sep{width:1px;height:26px;margin:0 2px;background:#bbb;border-right:1px solid #f8f8f8;flex:none;box-sizing:content-box}
.find{width:110px;height:23px;margin-left:4px;flex:none;background:#fff;border:1px solid #bbb;display:flex;align-items:center;justify-content:space-between;padding:0 3px;color:#999;font-size:12px}
.fmag{width:16px;height:16px}
.more{width:12px;font:bold 11px "Liberation Sans",sans-serif;align-self:flex-start;margin-top:2px;margin-left:auto;margin-right:4px}

.status{height:21px;flex:none;background:#d9d9d9;display:flex;align-items:center;font-weight:700;font-size:12px;border-top:1px solid #eee;border-bottom:1px solid #7a7a7a}
.st1{width:680px;padding-left:3px;white-space:nowrap;height:100%;border-right:1px solid #aaa;line-height:17px}
.st2{padding-left:4px;width:682px;height:100%;line-height:17px}
.st3{width:20px;border-left:1px solid #aaa;height:100%}
.st4{border-left:1px solid #aaa;height:100%;padding-left:3px}
.sti{width:16px;height:16px;display:block;margin:1px 0 0 1px}

.main{height:625px;flex:none;display:flex;position:relative;background:#e9e9e9}
.rail{width:32px;flex:none;display:flex;flex-direction:column;background:#ababab}
.railtop{height:45px;background:#dcdcdc;padding:6px 0 0 6px;flex:none}
.rgear{width:17px;height:17px;color:#333}
.tabs{display:flex;flex-direction:column;padding-left:5px;flex:1}
.tab{width:26px;height:40px;flex:none;background:linear-gradient(90deg,#f3f3f3,#d4d4d4);border:1px solid #888;border-right:0;border-radius:5px 0 0 5px;display:flex;align-items:center;justify-content:center;margin-bottom:3px}
.tab svg{width:22px;height:22px;margin-left:1px}
.tab.act{width:27px;height:44px;margin:-1px 0 0;background:#f1f1f1;border-color:#aaa}
.t3{margin-bottom:1px}.t5{margin-bottom:1px}.t6{margin-bottom:4px}.t7{height:38px;margin-bottom:15px}.t8{margin-bottom:13px}.t9{margin-bottom:14px}.t10{margin-bottom:3px}.t11{margin-bottom:2px}
.stub{height:11px;border-bottom:0;margin-bottom:4px}
.scb{display:flex;flex-direction:column;gap:2px;margin-left:3px}
.scb b{width:15px;height:15px;background:#d8d8d8;border:1px solid #eee;font:8px "Liberation Sans",sans-serif;display:flex;align-items:center;justify-content:center;color:#333}
.scb .dis{color:#aaa}
.scb .bart{border-top:3px solid #aaa}
.scb .barb{border-bottom:3px solid #333}

.panel{width:701px;flex:none;display:flex;flex-direction:column;padding-left:6px;background:#e9e9e9;position:relative}
.phead{height:31px;flex:none;display:flex;align-items:center;justify-content:space-between;padding:0 14px 0 5px;font-weight:700;font-size:13px}
.pmax{width:13px;height:11px;border:1px solid #111;border-top-width:2px}
.tbl{width:685px;height:576px;flex:none;border:1px solid #777;border-width:1px 2px 2px 2px;background:#fff;position:relative;overflow:hidden}
.r{display:grid;grid-template-columns:136px 37px 73px 36px 60px 58px 64px 66px 1fr;height:20px}
.r>div{border-right:2px solid #ececec;white-space:nowrap;overflow:hidden;display:flex;align-items:center;padding-left:3px;height:20px;border-bottom:1px solid #e4e4e4}
.r:nth-child(even)>div{background:#f5f5f5}
.hd{height:17px}
.hd>div,.r.hd>div{height:17px;background:linear-gradient(#f2f2f2,#dcdcdc)!important;border-right:1px solid #aaa;border-bottom:1px solid #888;font-size:12px;padding-left:5px;color:#222}
.m{font:10px/1 "Liberation Mono","Noto Sans CJK SC",monospace;color:#222}
.r>.m{padding-top:2px}
.cjk{font:12px "Noto Sans CJK SC",sans-serif;margin-top:-2px}
.tv{position:relative}
.tv svg{margin-top:-2px}
.r>.l1{padding-left:20px}.r>.l2{padding-left:39px}.r>.l3{padding-left:40px}
.l1::before,.l2::before,.l3::before{content:"";position:absolute;top:10px;height:1px;border-top:1px dotted #888}
.l1::before{left:10px;width:10px}
.l2::before,.l3::before{left:29px;width:10px}
.n16{width:16px;height:16px;flex:none;margin-right:2px;background:transparent}
.n14{width:14px;height:14px;flex:none}
.l3 .n16{margin-right:3px}
.cc{padding-left:5px!important}
.ex{position:absolute;left:4px;top:5px;width:10px;height:10px;background:#fff;border:1px solid #888;border-radius:2px;font:10px/8px "Liberation Mono",monospace;text-align:center;color:#333;z-index:1}
.sel>div{background:#3399ff!important;color:#fff;border-right-color:#fff}
.sel>div:first-child{background:#fff!important;color:#222}
.sel>div:last-child{background:#fff!important}
.selt{background:#3399ff;color:#fff;flex:1;height:20px;line-height:20px;padding-left:2px;margin-top:-2px}
.r.sel>div:first-child{padding-right:0;border-right:0}
.vdot{position:absolute;border-left:1px dotted #888;width:1px}
.v1{left:9px;top:47px;height:60px}
.v2{left:28px;top:116px;height:331px}
.blackline{position:absolute;left:135px;top:17px;width:1px;bottom:0;background:#000}
.hsb{height:12px;flex:none;display:flex;align-items:center;padding-top:4px}
.hl{width:273px;height:3px;background:#f7f7f7;border-bottom:1px solid #bbb}
.thumb{width:129px;height:6px;margin-left:5px;background:#d0d0d0;border:1px solid #eee}
.hl2{flex:1;height:1px;margin-right:14px;background:#ccc}
.pfoot{flex:1;border-bottom:1px solid #999}

.gfx{flex:1;background:#212329;position:relative;overflow:hidden;border-left:1px solid #111}
.scene{position:absolute;left:0;top:0;width:707px;height:625px}
.lb{font:39px "Liberation Sans",sans-serif}
.lb.s{font-size:36px}
.lb2{font:14px "Liberation Sans",sans-serif}
.tri{font:10px "Liberation Sans",sans-serif}
.coord{position:absolute;left:263px;top:305px;width:90px;height:61px;background:#c8c8c8;border:1px solid #777;display:flex}
.cgrip{width:12px;background:repeating-linear-gradient(#333 0 2px,#888 2px 4px)}
.crows{display:flex;flex-direction:column;gap:3px;padding:3px 3px 0 3px;flex:1}
.crows label{display:flex;align-items:center;font:10px "Liberation Mono",monospace;height:15px;gap:6px}
.crows label span{flex:1;background:#fff;border:1px solid #777;border-radius:2px;height:15px;line-height:13px;padding-left:2px;overflow:hidden;white-space:nowrap}
.crows .rt{text-align:right;padding-right:0}
.edge{position:absolute;right:0;top:247px;width:9px;height:60px;background:#111;border:1px solid #666;border-right:0;border-radius:4px 0 0 4px}

.dlg{position:absolute;left:365px;top:61px;width:290px;height:465px;background:#ededed;border:1px solid #888;border-radius:6px;display:flex;flex-direction:column;z-index:3;overflow:hidden}
.dtitle{height:20px;flex:none;background:#1a1a1a;display:flex;align-items:center;color:#fff;font-size:12px;line-height:16px}
.dg{width:21px;height:20px;border-right:1px solid #888;display:flex;align-items:center;justify-content:center;color:#ddd}
.dg svg{width:14px;height:14px}
.dtitle b{margin-left:8px;flex:1;padding-bottom:3px}
.dx{width:20px;height:20px;border-left:1px solid #888;font:bold 14px/20px "Liberation Sans",sans-serif;text-align:center}
.dbody{flex:1;padding:4px 6px 0;display:flex;flex-direction:column}
.sh{height:22px;flex:none;background:linear-gradient(#fbfbfb 0,#f2f2f2 45%,#d7d7d7 55%,#e2e2e2);border-bottom:1px solid #999;display:flex;align-items:center;justify-content:space-between;font-weight:700;font-size:12px;padding-left:6px;margin-bottom:1px;line-height:16px}
.sh span{padding-bottom:2px}
.sh i{width:22px;height:21px;border-left:1px solid #999;position:relative;flex:none}
.up::after,.down::after,.dnc::after{content:"";position:absolute;left:6px;top:7px;width:7px;height:7px;border:solid #666;border-width:2.500px 0 0 2.500px;transform:rotate(45deg)}
.down::after,.dnc::after{top:3px;transform:rotate(225deg)}
.sb{background:#cfcfcf;border-bottom:1px solid #aaa;flex:none;margin-bottom:1px}
.s1{height:71px;padding:6px 9px 0 8px}
.spec{height:31px;display:flex;align-items:center;background:linear-gradient(90deg,#e2a468,#deb48c 50%,#cfcfcf 78%);border-radius:3px;padding-left:3px}
.ok{width:14px;height:14px;margin-right:5px;flex:none}
.bw{width:22px;height:23px;border:1px solid #777;border-radius:4px;background:linear-gradient(#fff,#ddd);margin-left:auto;display:flex;align-items:center;justify-content:center;flex:none}
.bw svg{width:18px;height:18px}
.sb2{width:47px;height:30px;margin-left:4px;border:1px solid #666;border-radius:4px;background:linear-gradient(#fff,#ddd);display:flex;flex:none;overflow:hidden;align-items:center}
.sb2 svg{width:24px;height:24px;margin-left:5px;flex:none}
.sb2.org{background:linear-gradient(#ffd0a0,#f08030)}
.drop{width:15px;align-self:stretch;margin-left:auto;background:linear-gradient(#3f85d8,#bcd8f4);position:relative;flex:none}
.drop::after{content:"";position:absolute;left:3px;top:45%;border:4px solid transparent;border-top:5px solid #111;border-bottom:0}
.drop.o{background:linear-gradient(#f08030,#ffc080);border-left:1px solid #a05010}
.det{height:22px;margin-top:4px;background:#bfbfbf;border-left:2px solid #999;border-bottom:1px solid #eee;display:flex;align-items:center;justify-content:space-between;font-weight:700;padding-left:7px;line-height:16px}
.det span{padding-bottom:2px}
.dnc{width:20px;height:16px;position:relative}
.s2{height:159px;padding:2px 9px 0 6px}
.fr{display:flex;align-items:center}
.h1{height:28px}.h2{height:28px}.h3{height:40px}.h4{height:17px}.h5{height:40px}
.lbl,.lbl2{font-size:12px;white-space:nowrap;line-height:16px;padding-bottom:2px}
.h2 svg.ok,.h3 svg.ok{margin-left:3px}
.sel2{width:117px;height:18px;margin-left:auto;border:1px solid #777;border-radius:3px;background:#fff;display:flex;overflow:hidden;padding-left:3px;align-items:center;line-height:16px}
.g2{margin-left:4px}
.num{margin-left:auto;width:64px;height:19px;border:1px solid #777;border-radius:3px;background:#fff;font:11px/17px "Liberation Mono",monospace;text-align:right;padding-right:2px}
.lg{width:30px;height:30px}
.lg svg{width:24px;height:24px}
.dsep{height:2px;background:#dcdcdc;border-bottom:1px solid #fff;flex:none;margin-top:3px}
.dfoot{display:flex;justify-content:flex-end;gap:7px;padding:4px 10px 0 0;flex:none}
.btn{width:52px;height:18px;border:1px solid #777;border-radius:4px;background:linear-gradient(#fff,#d4d4d4);display:flex;align-items:center;justify-content:center;font-size:12px;line-height:14px;padding-bottom:1px}
.okb{background:linear-gradient(#e6f8e0,#6cd060);border-color:#3a7a3a}
.dbot{height:9px;flex:none;background:#1d1d1d;margin-top:auto}

.bbar{height:34px;flex:none;display:flex;background:#d6d6d6}
.bbar .grp{height:33px}
.selbar{height:28px;flex:none;display:flex;align-items:center;padding-left:6px;background:linear-gradient(#e6e6e6,#d4d4d4);border-top:1px solid #f3f3f3;border-bottom:1px solid #666}
.cb1{width:113px;height:17px;background:#d8d8d8;border:1px solid #bbb;border-radius:3px;position:relative;flex:none}
.dg1{position:absolute;right:1px;top:1px;width:15px;height:13px;background:#eee;border-left:1px solid #ccc}
.dg1::after{content:"";position:absolute;left:3px;top:4px;border:4px solid transparent;border-top:6px solid #aaa;border-bottom:0}
.cb2{width:120px;height:18px;margin-left:9px;flex:none;background:#fff;border:1px solid #555;display:flex;align-items:center;font-size:12px;overflow:hidden;line-height:16px}
.u{width:20px;height:20px;margin:0 1.500px;flex:none}
.u.fn{margin:0}
.u.redb{outline:1px solid #c01010}
.u.bxd{background:#fff;outline:1px solid #444}
.selbar .sep{margin:0 3px;height:22px}
.selbar .u:first-of-type{margin-left:5px}
.cb2+.u{margin-left:5px}

.task{height:40px;flex:none;display:flex;align-items:stretch;background:linear-gradient(90deg,#b8d2ec 0,#b4cfe9 70%,#8fa5bc 85%,#7f93aa);position:relative;color:#fff}
.orb{width:59px;display:flex;align-items:center;justify-content:center;background:linear-gradient(90deg,#7e94ac,#9fb4cb);flex:none}
.orb svg{width:38px;height:38px}
.tb{width:59px;margin-right:3px;display:flex;align-items:center;justify-content:center;flex:none;border:1px solid #567;border-radius:3px;background:linear-gradient(#c8def2,#a9c8e6)}
.tb svg{width:30px;height:30px}
.act1{background:linear-gradient(#fff,#d4e4f4)}
.grn{background:linear-gradient(#a0d888,#60b050)}
.tray{position:absolute;left:1133px;top:10px;display:flex;align-items:center;gap:8px}
.ch{font:10px "Liberation Mono",monospace}
.ts{width:16px;height:16px}
.ex2{font-size:10px;margin-left:2px}
.temp{position:absolute;left:1211px;top:3px;width:50px;display:flex;flex-direction:column;align-items:center;font-size:11px;line-height:17px}
.tri-up{position:absolute;left:1281px;top:20px;border:4px solid transparent;border-bottom:5px solid #eee;border-top:0}
.net{position:absolute;left:1301px;top:11px;width:24px;height:20px}
.spk{position:absolute;left:1325px;top:11px;width:24px;height:20px}
.clock{position:absolute;left:1353px;top:3px;width:70px;display:flex;flex-direction:column;align-items:center;font-size:11px;line-height:17px}
.showd{position:absolute;right:0;top:0;width:14px;height:40px;background:linear-gradient(#aab8c8,#607488);border:1px solid #ccd}

.wm{position:absolute;left:1157px;top:805px;width:283px;height:90px;z-index:5;pointer-events:none}
.wmhex{position:absolute;left:0;top:0;width:74px;height:86px}
.wmt{position:absolute;left:80px;top:-4px;font:700 38px "Liberation Sans","Noto Sans CJK SC",sans-serif;color:#fff;opacity:.5;letter-spacing:3px;white-space:nowrap}
.wmu{position:absolute;left:83px;top:56px;font:700 15.500px "Liberation Sans",sans-serif;color:#fff;opacity:.5;letter-spacing:2.400px;white-space:nowrap}
.ime{position:absolute;left:1240px;top:837px;width:200px;height:22px;background:#fff;z-index:4;display:flex;align-items:center;color:#1f74c8}
.imes{width:27px;height:28px;margin:0 0 0 -5px;flex:none}
.ime b{width:20px;margin-left:1px;text-align:center;font-weight:700;font-size:13px;line-height:1;flex:none}
.ii1{width:17px;height:17px;margin-left:5px;flex:none}
.sbar{position:absolute;left:1430px;top:800px;width:10px;height:58px;background:linear-gradient(90deg,#ccc,#e8e8e8);border:1px solid #aaa;border-radius:3px 0 0 3px;z-index:6;opacity:.8}
```
